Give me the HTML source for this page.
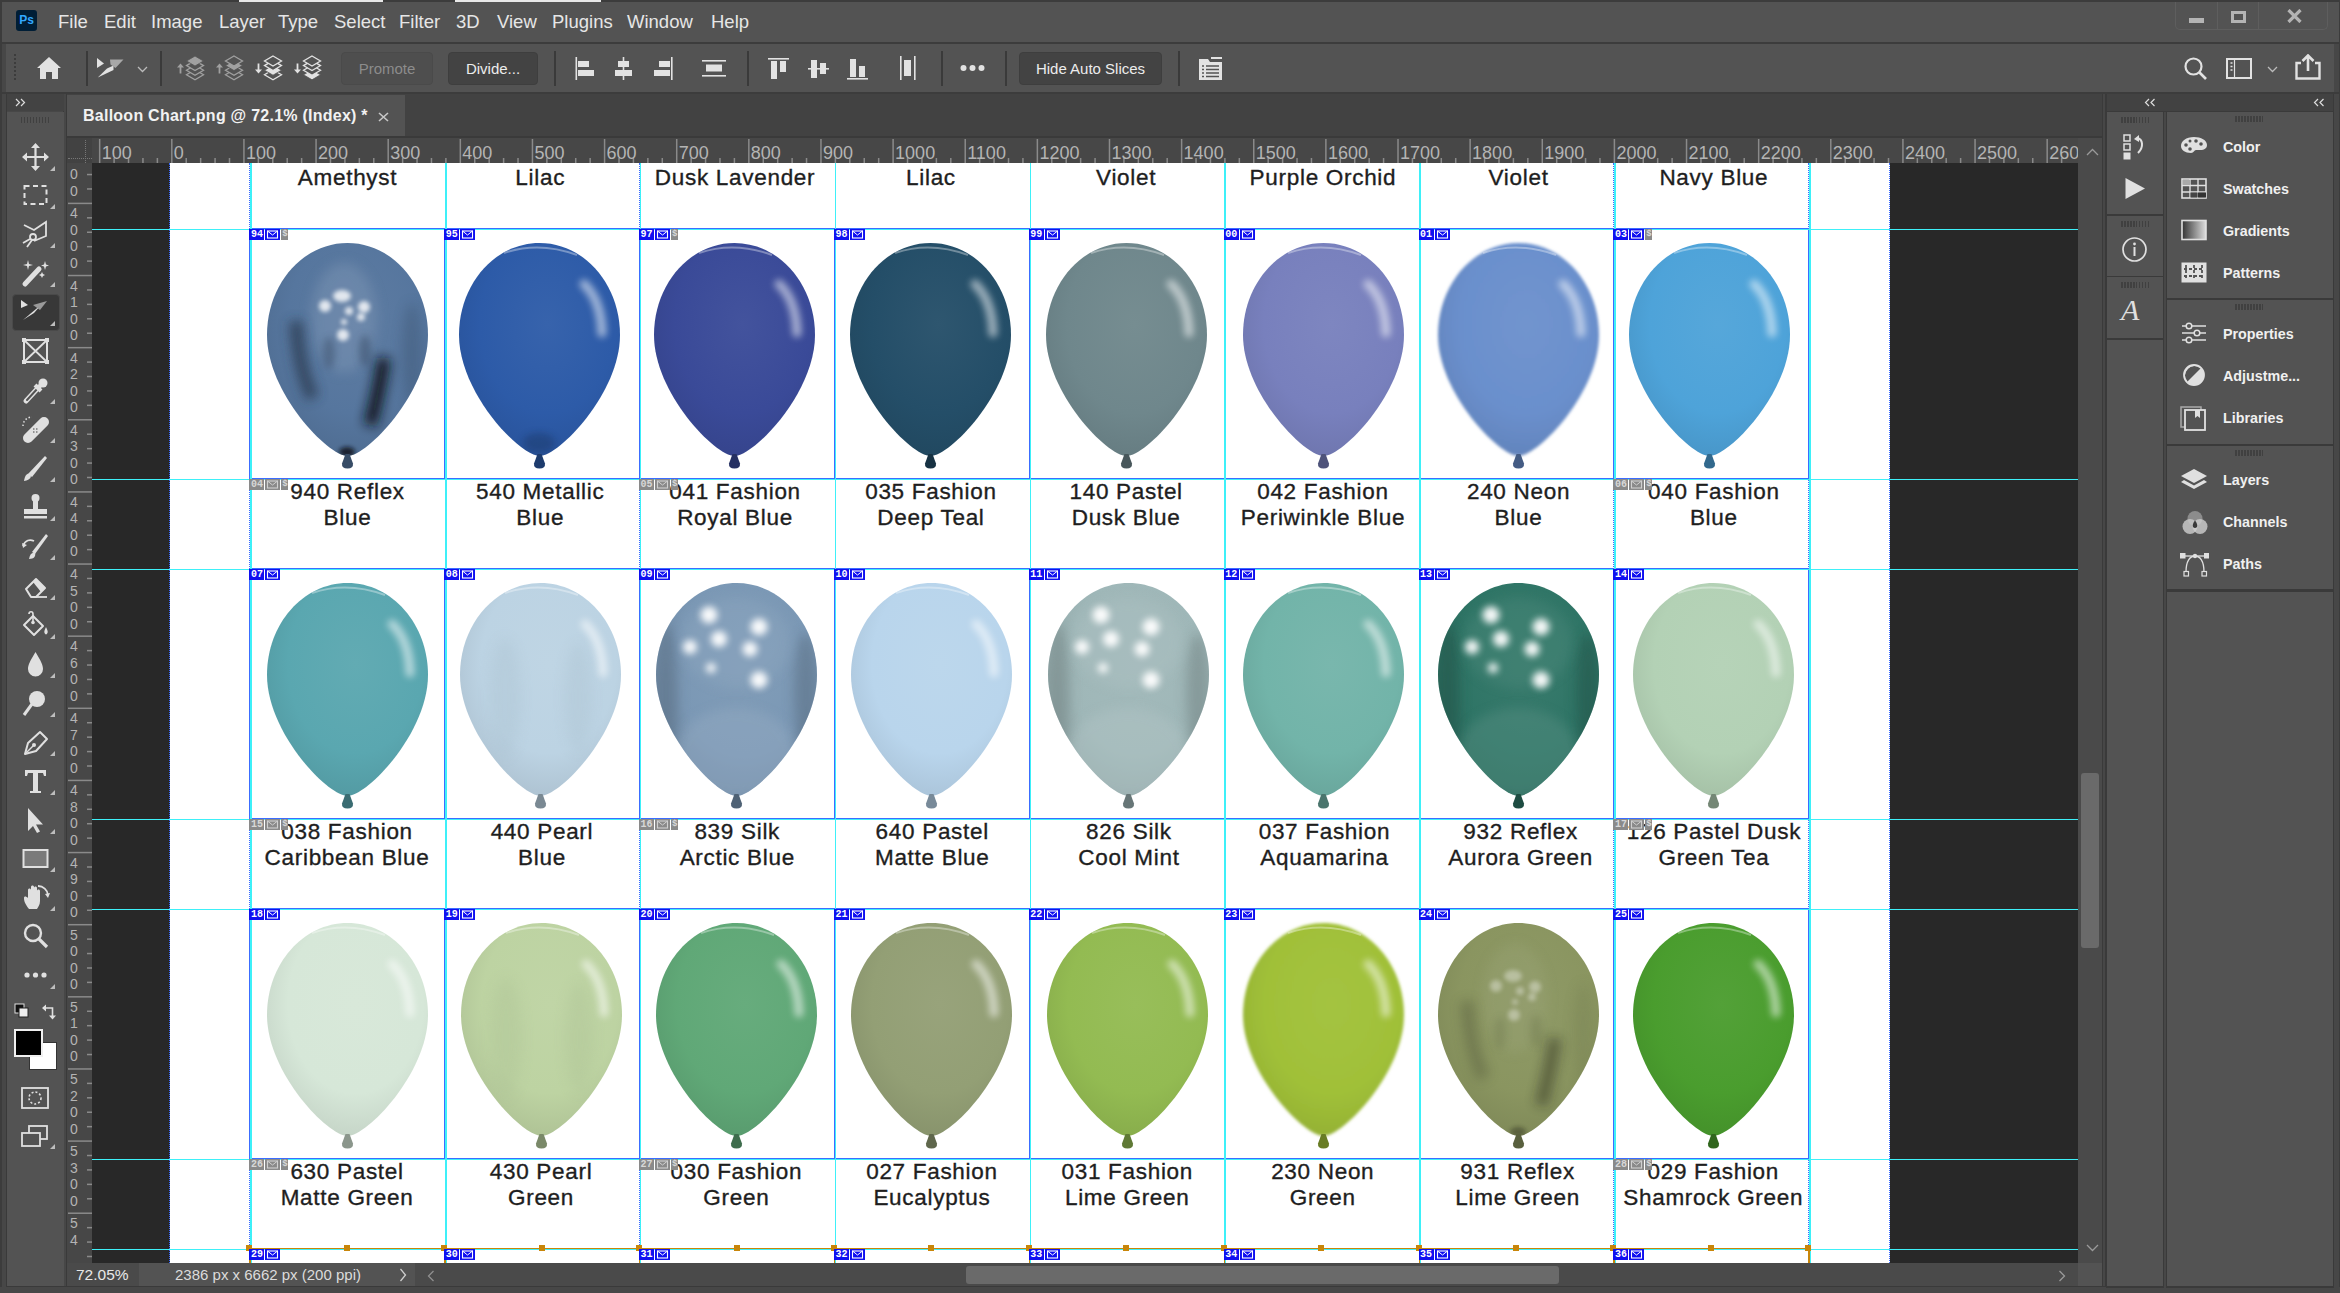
<!DOCTYPE html><html><head><meta charset="utf-8"><style>
*{margin:0;padding:0;box-sizing:border-box}
html,body{width:2340px;height:1293px;overflow:hidden;background:#474747;font-family:"Liberation Sans", sans-serif;position:relative}
.ab{position:absolute}
.menu{position:absolute;top:11px;font-size:18.5px;color:#e6e6e6;white-space:nowrap}
.sep{position:absolute;width:2px;background:#3a3a3a}
.btn{position:absolute;border-radius:4px;font-size:15px;text-align:center;white-space:nowrap}
.rl{position:absolute;font-size:18px;color:#b4b4b4;white-space:nowrap;line-height:1}
.vd{position:absolute;font-size:14px;color:#b4b4b4;line-height:1;width:14px;text-align:center}
.lab{position:absolute;font-size:22.5px;color:#1e1e1e;text-align:center;line-height:26.3px;white-space:nowrap;letter-spacing:0.7px;-webkit-text-stroke:0.35px #1e1e1e}
.pi{position:absolute;font-size:14.3px;font-weight:bold;color:#f0f0f0;white-space:nowrap}
.bd{position:absolute;height:11px;background:#1010f0;color:#fff;font:bold 10px "Liberation Mono",monospace;line-height:11px;text-align:center}
.bg{position:absolute;height:11px;background:#8a8a8a;color:#d8d8d8;font:bold 10px "Liberation Mono",monospace;line-height:11px;text-align:center}
</style></head><body>

<div class="ab" style="left:0;top:0;width:2340px;height:42px;background:#535353"></div>
<div class="ab" style="left:0;top:0;width:2340px;height:1.5px;background:#3c3c3c"></div><div class="ab" style="left:239px;top:0;width:144px;height:1.5px;background:#e8e8e8"></div><div class="ab" style="left:455px;top:0;width:146px;height:1.5px;background:#e8e8e8"></div><div class="ab" style="left:0;top:0;width:1.5px;height:1293px;background:#3c3c3c"></div>
<div class="ab" style="left:16px;top:10px;width:21px;height:21px;background:#001e36;border-radius:3px;color:#31a8ff;font:bold 12px/21px 'Liberation Sans';text-align:center">Ps</div>
<div class="menu" style="left:58px">File</div>
<div class="menu" style="left:104px">Edit</div>
<div class="menu" style="left:151px">Image</div>
<div class="menu" style="left:219px">Layer</div>
<div class="menu" style="left:278px">Type</div>
<div class="menu" style="left:334px">Select</div>
<div class="menu" style="left:399px">Filter</div>
<div class="menu" style="left:456px">3D</div>
<div class="menu" style="left:497px">View</div>
<div class="menu" style="left:552px">Plugins</div>
<div class="menu" style="left:627px">Window</div>
<div class="menu" style="left:711px">Help</div>
<div class="ab" style="left:2175px;top:2px;width:153px;height:28px;border:1px solid #5e5e5e;border-top:none;border-radius:0 0 5px 5px"></div><div class="ab" style="left:2217px;top:2px;width:1px;height:27px;background:#5e5e5e"></div><div class="ab" style="left:2258px;top:2px;width:1px;height:27px;background:#5e5e5e"></div>
<div class="ab" style="left:2189px;top:18px;width:15px;height:5px;background:#b4b4b4"></div>
<div class="ab" style="left:2231px;top:11px;width:15px;height:12px;border:3px solid #b4b4b4"></div>
<svg class="ab" style="left:2286px;top:9px" width="17" height="14"><path d="M2.5 1 L14.5 13 M14.5 1 L2.5 13" stroke="#b4b4b4" stroke-width="3.2"/></svg><div class="ab" style="left:2338.5px;top:0;width:1.5px;height:1293px;background:#3c3c3c"></div>
<div class="ab" style="left:0;top:42px;width:2340px;height:2px;background:#3c3c3c"></div>
<div class="ab" style="left:6px;top:44px;width:2328px;height:48px;background:#535353"></div>
<div class="ab" style="left:0;top:92px;width:2340px;height:2px;background:#3c3c3c"></div>
<div class="ab" style="left:14px;top:54px;width:2px;height:28px;background:repeating-linear-gradient(#3c3c3c 0 2.2px,transparent 2.2px 4px)"></div>
<svg class="ab" style="left:36px;top:56px" width="26" height="24"><path d="M13 1 L25 12 L22 12 L22 23 L16 23 L16 16 L10 16 L10 23 L4 23 L4 12 L1 12 Z" fill="#e2e2e2"/></svg>
<div class="sep" style="left:86px;top:51px;height:35px"></div>
<div class="sep" style="left:160px;top:51px;height:35px"></div>
<div class="sep" style="left:554px;top:51px;height:35px"></div>
<div class="sep" style="left:747px;top:51px;height:35px"></div>
<div class="sep" style="left:941px;top:51px;height:35px"></div>
<div class="sep" style="left:1005px;top:51px;height:35px"></div>
<div class="sep" style="left:1178px;top:51px;height:35px"></div>
<svg class="ab" style="left:96px;top:57px" width="28" height="22"><path d="M1 1 L8 6.5 L1 11 Z" fill="#e2e2e2"/><path d="M1.8 20.5 L11 11.5 L17.5 8.5 L17.5 13 Z" fill="#e2e2e2"/><path d="M14 2.5 L27.5 2.5 L19.5 11 L14.5 7.5 Z" fill="#a8a8a8"/></svg>
<svg class="ab" style="left:137px;top:66px" width="11" height="7"><path d="M1 1 L5.5 5.5 L10 1" stroke="#bbb" stroke-width="1.3" fill="none"/></svg>
<svg class="ab" style="left:177px;top:55px" width="30" height="27"><path d="M3.5 18.5 L3.5 11" stroke="#a0a0a0" stroke-width="1.8"/><path d="M0 12.5 L3.5 8.5 L7 12.5 Z" fill="#a0a0a0"/><path d="M18.0 14.799999999999999 L26.5 19.799999999999997 L18.0 24.799999999999997 L9.5 19.799999999999997 Z" fill="#535353" stroke="#a0a0a0" stroke-width="1.3"/><path d="M18.0 10.2 L26.5 15.2 L18.0 20.2 L9.5 15.2 Z" fill="#535353" stroke="#a0a0a0" stroke-width="1.3"/><path d="M18.0 5.6 L26.5 10.6 L18.0 15.6 L9.5 10.6 Z" fill="#535353" stroke="#a0a0a0" stroke-width="1.3"/><path d="M18.0 1.0 L26.5 6.0 L18.0 11.0 L9.5 6.0 Z" fill="#a0a0a0" stroke="#535353" stroke-width="0.8"/></svg>
<svg class="ab" style="left:216px;top:55px" width="30" height="27"><path d="M3.5 18.5 L3.5 11" stroke="#a0a0a0" stroke-width="1.8"/><path d="M0 12.5 L3.5 8.5 L7 12.5 Z" fill="#a0a0a0"/><path d="M18.0 14.799999999999999 L26.5 19.799999999999997 L18.0 24.799999999999997 L9.5 19.799999999999997 Z" fill="#535353" stroke="#a0a0a0" stroke-width="1.3"/><path d="M18.0 10.2 L26.5 15.2 L18.0 20.2 L9.5 15.2 Z" fill="#535353" stroke="#a0a0a0" stroke-width="1.3"/><path d="M18.0 5.6 L26.5 10.6 L18.0 15.6 L9.5 10.6 Z" fill="#a0a0a0" stroke="#535353" stroke-width="0.8"/><path d="M18.0 1.0 L26.5 6.0 L18.0 11.0 L9.5 6.0 Z" fill="#535353" stroke="#a0a0a0" stroke-width="1.3"/></svg>
<svg class="ab" style="left:255px;top:55px" width="30" height="27"><path d="M3.5 8.5 L3.5 16" stroke="#e2e2e2" stroke-width="1.8"/><path d="M0 14.5 L3.5 18.5 L7 14.5 Z" fill="#e2e2e2"/><path d="M18.0 14.799999999999999 L26.5 19.799999999999997 L18.0 24.799999999999997 L9.5 19.799999999999997 Z" fill="#535353" stroke="#e2e2e2" stroke-width="1.3"/><path d="M18.0 10.2 L26.5 15.2 L18.0 20.2 L9.5 15.2 Z" fill="#e2e2e2" stroke="#535353" stroke-width="0.8"/><path d="M18.0 5.6 L26.5 10.6 L18.0 15.6 L9.5 10.6 Z" fill="#535353" stroke="#e2e2e2" stroke-width="1.3"/><path d="M18.0 1.0 L26.5 6.0 L18.0 11.0 L9.5 6.0 Z" fill="#535353" stroke="#e2e2e2" stroke-width="1.3"/></svg>
<svg class="ab" style="left:294px;top:55px" width="30" height="27"><path d="M3.5 8.5 L3.5 16" stroke="#e2e2e2" stroke-width="1.8"/><path d="M0 14.5 L3.5 18.5 L7 14.5 Z" fill="#e2e2e2"/><path d="M18.0 14.799999999999999 L26.5 19.799999999999997 L18.0 24.799999999999997 L9.5 19.799999999999997 Z" fill="#e2e2e2" stroke="#535353" stroke-width="0.8"/><path d="M18.0 10.2 L26.5 15.2 L18.0 20.2 L9.5 15.2 Z" fill="#535353" stroke="#e2e2e2" stroke-width="1.3"/><path d="M18.0 5.6 L26.5 10.6 L18.0 15.6 L9.5 10.6 Z" fill="#535353" stroke="#e2e2e2" stroke-width="1.3"/><path d="M18.0 1.0 L26.5 6.0 L18.0 11.0 L9.5 6.0 Z" fill="#535353" stroke="#e2e2e2" stroke-width="1.3"/></svg>
<div class="btn" style="left:341px;top:52px;width:92px;height:33px;background:#4e4e4e;border:1px solid #4a4a4a;color:#8c8c8c;line-height:31px">Promote</div>
<div class="btn" style="left:448px;top:52px;width:90px;height:33px;background:#434343;border:1px solid #3e3e3e;color:#ececec;line-height:31px">Divide...</div>
<div class="btn" style="left:1019px;top:52px;width:143px;height:33px;background:#434343;border:1px solid #3e3e3e;color:#ececec;line-height:31px">Hide Auto Slices</div>
<svg class="ab" style="left:575px;top:56px" width="22" height="25"><rect x="0.5" y="1" width="1.6" height="23" fill="#e2e2e2"/><rect x="3" y="5" width="11" height="6" fill="#e2e2e2"/><rect x="3" y="14" width="16" height="6" fill="#e2e2e2"/></svg>
<svg class="ab" style="left:615px;top:56px" width="18" height="25"><rect x="7.7" y="1" width="1.6" height="23" fill="#e2e2e2"/><rect x="3" y="5" width="11" height="6" fill="#e2e2e2"/><rect x="0" y="14" width="17" height="6" fill="#e2e2e2"/></svg>
<svg class="ab" style="left:653px;top:56px" width="22" height="25"><rect x="18" y="1" width="1.6" height="23" fill="#e2e2e2"/><rect x="6" y="5" width="11" height="6" fill="#e2e2e2"/><rect x="1" y="14" width="16" height="6" fill="#e2e2e2"/></svg>
<svg class="ab" style="left:702px;top:60px" width="25" height="17"><rect x="0" y="0" width="24" height="1.6" fill="#e2e2e2"/><rect x="4" y="4.5" width="16" height="7" fill="#e2e2e2"/><rect x="0" y="15" width="24" height="1.6" fill="#e2e2e2"/></svg>
<svg class="ab" style="left:768px;top:58px" width="22" height="22"><rect x="0" y="0" width="21" height="1.6" fill="#e2e2e2"/><rect x="3" y="3" width="6" height="18" fill="#e2e2e2"/><rect x="12" y="3" width="6" height="11" fill="#e2e2e2"/></svg>
<svg class="ab" style="left:808px;top:58px" width="22" height="22"><rect x="0" y="10" width="21" height="1.6" fill="#e2e2e2"/><rect x="3" y="2" width="6" height="18" fill="#e2e2e2"/><rect x="12" y="5" width="6" height="11" fill="#e2e2e2"/></svg>
<svg class="ab" style="left:847px;top:58px" width="22" height="22"><rect x="0" y="20" width="21" height="1.6" fill="#e2e2e2"/><rect x="3" y="1" width="6" height="18" fill="#e2e2e2"/><rect x="12" y="8" width="6" height="11" fill="#e2e2e2"/></svg>
<svg class="ab" style="left:900px;top:56px" width="17" height="25"><rect x="0" y="0" width="1.6" height="24" fill="#e2e2e2"/><rect x="4" y="4" width="7" height="16" fill="#e2e2e2"/><rect x="14" y="0" width="1.6" height="24" fill="#e2e2e2"/></svg>
<svg class="ab" style="left:960px;top:64px" width="26" height="8"><circle cx="3.5" cy="4" r="3" fill="#e2e2e2"/><circle cx="12.5" cy="4" r="3" fill="#e2e2e2"/><circle cx="21.5" cy="4" r="3" fill="#e2e2e2"/></svg>
<svg class="ab" style="left:1198px;top:56px" width="26" height="25"><path d="M1 3 L10 3 L12 6 L24 6 L24 24 L1 24 Z" fill="#e2e2e2"/><rect x="13" y="1" width="11" height="2" fill="#e2e2e2"/><g stroke="#535353" stroke-width="1.3"><path d="M4 10 H6 M8 10 H21 M4 13.5 H6 M8 13.5 H21 M4 17 H6 M8 17 H21 M4 20.5 H6 M8 20.5 H21"/></g></svg>
<svg class="ab" style="left:2184px;top:57px" width="24" height="23"><circle cx="9.5" cy="9.5" r="8" stroke="#e2e2e2" stroke-width="2.2" fill="none"/><path d="M15.5 15.5 L22 22" stroke="#e2e2e2" stroke-width="2.6"/></svg>
<svg class="ab" style="left:2226px;top:58px" width="27" height="22"><rect x="1" y="1" width="24" height="19" stroke="#e2e2e2" stroke-width="2" fill="none"/><path d="M4.5 5 H6.5 M4.5 8.5 H6.5 M4.5 12 H6.5" stroke="#e2e2e2" stroke-width="1.5"/><path d="M8.5 2 V19" stroke="#e2e2e2" stroke-width="1.2"/></svg>
<svg class="ab" style="left:2267px;top:66px" width="11" height="7"><path d="M1 1 L5.5 5.5 L10 1" stroke="#bbb" stroke-width="1.3" fill="none"/></svg>
<svg class="ab" style="left:2295px;top:54px" width="26" height="26"><path d="M6 9 H1.5 V24.5 H24.5 V9 H20" stroke="#e2e2e2" stroke-width="2.4" fill="none"/><path d="M13 17 V2 M7.5 7 L13 1.5 L18.5 7" stroke="#e2e2e2" stroke-width="2.6" fill="none"/></svg>
<div class="ab" style="left:67px;top:94px;width:2037px;height:44px;background:#424242"></div>
<div class="ab" style="left:67px;top:95px;width:338px;height:42px;background:#535353"></div>
<div class="ab" style="left:83px;top:107px;font-size:16px;font-weight:bold;color:#f2f2f2;white-space:nowrap;letter-spacing:0.25px">Balloon Chart.png @ 72.1% (Index) *</div>
<svg class="ab" style="left:378px;top:112px" width="11" height="10"><path d="M1 1 L10 9 M10 1 L1 9" stroke="#c8c8c8" stroke-width="1.6"/></svg>
<div class="ab" style="left:63px;top:94px;width:4px;height:1193px;background:#474747;border-left:1px solid #3a3a3a;border-right:1px solid #3a3a3a"></div>
<div class="ab" style="left:6px;top:94px;width:1px;height:1193px;background:#3a3a3a"></div>
<div class="ab" style="left:7px;top:94px;width:57px;height:17px;background:#434343"></div>
<svg class="ab" style="left:15px;top:98px" width="12" height="9"><path d="M1 1 L4.5 4.5 L1 8 M6 1 L9.5 4.5 L6 8" stroke="#ddd" stroke-width="1.2" fill="none"/></svg>
<div class="ab" style="left:7px;top:112px;width:57px;height:1175px;background:#535353"></div>
<div class="ab" style="left:21px;top:117px;width:28px;height:6px;background:repeating-linear-gradient(90deg,#404040 0 1.5px,transparent 1.5px 3px)"></div>
<div class="ab" style="left:12px;top:294px;width:48px;height:37px;background:#383838;border:1px solid #4a4a4a;border-radius:4px"></div>
<svg class="ab" style="left:20px;top:142px" width="38" height="30"><path d="M15.5 3 V27 M4 15 H27" stroke="#e0e0e0" stroke-width="2.2"/><path d="M15.5 1 L11 6 H20 Z M15.5 29 L11 24 H20 Z M2 15 L7 10.5 V19.5 Z M29 15 L24 10.5 V19.5 Z" fill="#e0e0e0"/><path d="M35 24 L35 29 L30 29 Z" fill="#bdbdbd"/></svg>
<svg class="ab" style="left:20px;top:180px" width="38" height="30"><rect x="4.5" y="6" width="22" height="18" fill="none" stroke="#e0e0e0" stroke-width="2" stroke-dasharray="5 3.5"/><path d="M35 24 L35 29 L30 29 Z" fill="#bdbdbd"/></svg>
<svg class="ab" style="left:20px;top:219px" width="38" height="30"><path d="M4 6 L14 11 L26 3 L26 17 L14 22" stroke="#e0e0e0" stroke-width="1.8" fill="none"/><circle cx="13" cy="18" r="3" stroke="#e0e0e0" stroke-width="1.8" fill="none"/><path d="M10 20 L3 24 M12 21 L7 28" stroke="#e0e0e0" stroke-width="1.8"/><path d="M35 24 L35 29 L30 29 Z" fill="#bdbdbd"/></svg>
<svg class="ab" style="left:20px;top:258px" width="38" height="30"><path d="M5 26 L19 11" stroke="#e0e0e0" stroke-width="5" stroke-linecap="round"/><path d="M8 2 L9 6 L13 7 L9 8 L8 12 L7 8 L3 7 L7 6 Z M25 3 L26 6.5 L29 7.5 L26 8.5 L25 12 L24 8.5 L21 7.5 L24 6.5 Z M22 14 L23 16 L25 17 L23 18 L22 20 L21 18 L19 17 L21 16 Z" fill="#e0e0e0"/><path d="M35 24 L35 29 L30 29 Z" fill="#bdbdbd"/></svg>
<svg class="ab" style="left:20px;top:297px" width="38" height="30"><path d="M1 3 L8 8 L1 11 Z" fill="#e0e0e0"/><path d="M3 23 L16 12 L21 8 L14 16 Z" fill="#e0e0e0"/><path d="M13 8 L27 4 L20 13 Z" fill="#9a9a9a"/><path d="M35 24 L35 29 L30 29 Z" fill="#bdbdbd"/></svg>
<svg class="ab" style="left:20px;top:336px" width="38" height="30"><rect x="4" y="4" width="23" height="22" fill="none" stroke="#e0e0e0" stroke-width="2"/><path d="M4 4 L27 26 M27 4 L4 26" stroke="#e0e0e0" stroke-width="1.8"/><path d="M2 2 h4 v4 h-4z M25 2 h4 v4 h-4z M2 24 h4 v4 h-4z M25 24 h4 v4 h-4z" fill="#e0e0e0"/></svg>
<svg class="ab" style="left:20px;top:375px" width="38" height="30"><path d="M6 26 L19 12" stroke="#e0e0e0" stroke-width="5" stroke-linecap="round"/><path d="M7 25 L18 13" stroke="#535353" stroke-width="2" stroke-linecap="round"/><path d="M15 10 L21 16" stroke="#e0e0e0" stroke-width="4"/><circle cx="23" cy="8" r="4.5" fill="#e0e0e0"/><path d="M35 24 L35 29 L30 29 Z" fill="#bdbdbd"/></svg>
<svg class="ab" style="left:20px;top:414px" width="38" height="30"><path d="M8 24 L24 8" stroke="#e0e0e0" stroke-width="10" stroke-linecap="round"/><path d="M13 15 h6 M13 18 h6" stroke="#777" stroke-width="1.5" stroke-dasharray="1.5 1.5"/><path d="M3 12 A9 9 0 0 1 12 3" stroke="#e0e0e0" stroke-width="1.5" fill="none" stroke-dasharray="1.5 2"/><path d="M35 24 L35 29 L30 29 Z" fill="#bdbdbd"/></svg>
<svg class="ab" style="left:20px;top:453px" width="38" height="30"><path d="M8 21 L25 3 L27 5 L12 24 Z" fill="#e0e0e0"/><path d="M4 28 C5 22 7 20 10 21 C12 23 11 27 4 28 Z" fill="#e0e0e0"/><path d="M35 24 L35 29 L30 29 Z" fill="#bdbdbd"/></svg>
<svg class="ab" style="left:20px;top:492px" width="38" height="30"><circle cx="15.5" cy="6" r="4" fill="#e0e0e0"/><path d="M13 9 h5 v8 h-5z" fill="#e0e0e0"/><path d="M4 17 h23 v5 h-23z M4 24 h23 v2.5 h-23z" fill="#e0e0e0"/><path d="M35 24 L35 29 L30 29 Z" fill="#bdbdbd"/></svg>
<svg class="ab" style="left:20px;top:531px" width="38" height="30"><path d="M12 21 L26 3 L28 5 L15 23 Z" fill="#e0e0e0"/><path d="M9 28 C10 23 12 21 15 22 C16 25 14 28 9 28 Z" fill="#e0e0e0"/><path d="M3 15 C5 9 10 8 14 10" stroke="#e0e0e0" stroke-width="1.8" fill="none"/><path d="M2 12 L3 17 L7 14 Z" fill="#e0e0e0"/><path d="M35 24 L35 29 L30 29 Z" fill="#bdbdbd"/></svg>
<svg class="ab" style="left:20px;top:571px" width="38" height="30"><path d="M6 18 L16 8 L25 17 L16 26 L11 26 Z" fill="none" stroke="#e0e0e0" stroke-width="2" stroke-linejoin="round"/><path d="M13 11 L16 8 L25 17 L21 21 Z" fill="#e0e0e0"/><path d="M11 26 H27" stroke="#e0e0e0" stroke-width="1.8"/><path d="M35 24 L35 29 L30 29 Z" fill="#bdbdbd"/></svg>
<svg class="ab" style="left:20px;top:610px" width="38" height="30"><path d="M4 15 L13 6 L23 16 L14 25 Z" fill="none" stroke="#e0e0e0" stroke-width="2" stroke-linejoin="round"/><path d="M9 4 C9 1 13 1 13 4 L13 12" stroke="#e0e0e0" stroke-width="1.6" fill="none"/><circle cx="13" cy="12.5" r="1.8" fill="#e0e0e0"/><path d="M26 17 C24 21 23.5 23 26 24.5 C28.5 23 28 21 26 17 Z" fill="#e0e0e0"/><path d="M35 24 L35 29 L30 29 Z" fill="#bdbdbd"/></svg>
<svg class="ab" style="left:20px;top:649px" width="38" height="30"><path d="M15.5 3 C10 12 8 16 8 20 A7.5 7.5 0 0 0 23 20 C23 16 21 12 15.5 3 Z" fill="#e0e0e0"/><path d="M35 24 L35 29 L30 29 Z" fill="#bdbdbd"/></svg>
<svg class="ab" style="left:20px;top:688px" width="38" height="30"><circle cx="17" cy="11" r="8" fill="#e0e0e0"/><path d="M12 16 L4 27" stroke="#e0e0e0" stroke-width="3"/><path d="M35 24 L35 29 L30 29 Z" fill="#bdbdbd"/></svg>
<svg class="ab" style="left:20px;top:727px" width="38" height="30"><path d="M5 27 L8 16 L20 5 L27 12 L16 24 Z" stroke="#e0e0e0" stroke-width="2" fill="none" stroke-linejoin="round"/><path d="M5 27 L13 19" stroke="#e0e0e0" stroke-width="1.5"/><circle cx="14" cy="18" r="2" fill="#e0e0e0"/><path d="M35 24 L35 29 L30 29 Z" fill="#bdbdbd"/></svg>
<svg class="ab" style="left:20px;top:766px" width="38" height="30"><path d="M5 4 H26 V10 H24 L23 7 H18 V25 H21 V27 H10 V25 H13 V7 H8 L7 10 H5 Z" fill="#e0e0e0"/><path d="M35 24 L35 29 L30 29 Z" fill="#bdbdbd"/></svg>
<svg class="ab" style="left:20px;top:805px" width="38" height="30"><path d="M8 3 L8 26 L13 21 L17 28 L20 26.5 L16 19.5 L23 19.5 Z" fill="#e0e0e0"/><path d="M35 24 L35 29 L30 29 Z" fill="#bdbdbd"/></svg>
<svg class="ab" style="left:20px;top:843px" width="38" height="30"><rect x="3.5" y="7" width="24" height="17" fill="#7a7a7a" stroke="#e0e0e0" stroke-width="2"/><path d="M35 24 L35 29 L30 29 Z" fill="#bdbdbd"/></svg>
<svg class="ab" style="left:20px;top:882px" width="38" height="30"><path d="M9 27 C5 22 4 19 4 16 C4 14 6 14 8 16 V8 C8 6 11 6 11 8 V13 V5 C11 3 14 3 14 5 V13 V6 C14 4 17 4 17 6 V14 V9 C17 7 20 7 20 9 V19 C20 23 18 25 17 27 Z" fill="#e0e0e0"/><path d="M18 4 A10 10 0 0 1 28 13" stroke="#e0e0e0" stroke-width="1.8" fill="none"/><path d="M25 12 L28 16 L30 11 Z" fill="#e0e0e0"/><path d="M35 24 L35 29 L30 29 Z" fill="#bdbdbd"/></svg>
<svg class="ab" style="left:20px;top:921px" width="38" height="30"><circle cx="13" cy="12" r="8" stroke="#e0e0e0" stroke-width="2.4" fill="none"/><path d="M19 18 L27 26" stroke="#e0e0e0" stroke-width="3.2"/></svg>
<svg class="ab" style="left:20px;top:960px" width="38" height="30"><circle cx="7" cy="15" r="2.6" fill="#e0e0e0"/><circle cx="15.5" cy="15" r="2.6" fill="#e0e0e0"/><circle cx="24" cy="15" r="2.6" fill="#e0e0e0"/><path d="M35 24 L35 29 L30 29 Z" fill="#bdbdbd"/></svg>
<svg class="ab" style="left:14px;top:1003px" width="46" height="20"><rect x="1" y="1" width="9" height="9" fill="#111" stroke="#e0e0e0" stroke-width="1"/><rect x="5" y="5" width="9" height="9" fill="#eee" stroke="#222" stroke-width="1"/><path d="M29.5 5 H38.5 V14.5" stroke="#e0e0e0" stroke-width="1.6" fill="none"/><path d="M28 5 L32 1.5 L32 8.5 Z M38.5 16.5 L35 12.5 L42 12.5 Z" fill="#e0e0e0"/></svg>
<div class="ab" style="left:29px;top:1042px;width:28px;height:28px;background:#fff;border:1px solid #333"></div>
<div class="ab" style="left:14px;top:1029px;width:29px;height:28px;background:#000;border:2px solid #f0f0f0"></div>
<svg class="ab" style="left:21px;top:1087px" width="29" height="23"><rect x="1" y="1" width="26" height="20" fill="none" stroke="#e0e0e0" stroke-width="1.8"/><circle cx="14" cy="11" r="6" fill="none" stroke="#e0e0e0" stroke-width="1.6" stroke-dasharray="2 2"/></svg>
<svg class="ab" style="left:20px;top:1124px" width="38" height="26"><rect x="9" y="2" width="18" height="13" fill="#535353" stroke="#e0e0e0" stroke-width="1.8"/><rect x="2" y="9" width="18" height="13" fill="#535353" stroke="#e0e0e0" stroke-width="1.8"/><path d="M35 20 L35 25 L30 25 Z" fill="#bdbdbd"/></svg>
<div class="ab" style="left:67px;top:136px;width:2037px;height:2px;background:#3a3a3a"></div>
<div class="ab" style="left:67px;top:138px;width:2011px;height:25px;background:#474747"></div>
<div class="ab" style="left:67px;top:163px;width:25px;height:1100px;background:#474747"></div>
<div class="ab" style="left:67px;top:138px;width:25px;height:25px;background:#424242"></div>
<div class="ab" style="left:68px;top:158px;width:24px;height:1px;border-top:1px dotted #777"></div>
<div class="ab" style="left:85px;top:140px;width:1px;height:23px;border-left:1px dotted #777"></div>
<svg class="ab" style="left:0;top:138px" width="2078" height="25"><rect x="98.92" y="1" width="1.5" height="24" fill="#8a8a8a"/><rect x="113.35" y="20" width="1.5" height="5" fill="#8a8a8a"/><rect x="127.77" y="20" width="1.5" height="5" fill="#8a8a8a"/><rect x="142.20" y="20" width="1.5" height="5" fill="#8a8a8a"/><rect x="156.62" y="20" width="1.5" height="5" fill="#8a8a8a"/><rect x="171.05" y="1" width="1.5" height="24" fill="#8a8a8a"/><rect x="185.48" y="20" width="1.5" height="5" fill="#8a8a8a"/><rect x="199.90" y="20" width="1.5" height="5" fill="#8a8a8a"/><rect x="214.33" y="20" width="1.5" height="5" fill="#8a8a8a"/><rect x="228.75" y="20" width="1.5" height="5" fill="#8a8a8a"/><rect x="243.18" y="1" width="1.5" height="24" fill="#8a8a8a"/><rect x="257.61" y="20" width="1.5" height="5" fill="#8a8a8a"/><rect x="272.03" y="20" width="1.5" height="5" fill="#8a8a8a"/><rect x="286.46" y="20" width="1.5" height="5" fill="#8a8a8a"/><rect x="300.88" y="20" width="1.5" height="5" fill="#8a8a8a"/><rect x="315.31" y="1" width="1.5" height="24" fill="#8a8a8a"/><rect x="329.74" y="20" width="1.5" height="5" fill="#8a8a8a"/><rect x="344.16" y="20" width="1.5" height="5" fill="#8a8a8a"/><rect x="358.59" y="20" width="1.5" height="5" fill="#8a8a8a"/><rect x="373.01" y="20" width="1.5" height="5" fill="#8a8a8a"/><rect x="387.44" y="1" width="1.5" height="24" fill="#8a8a8a"/><rect x="401.87" y="20" width="1.5" height="5" fill="#8a8a8a"/><rect x="416.29" y="20" width="1.5" height="5" fill="#8a8a8a"/><rect x="430.72" y="20" width="1.5" height="5" fill="#8a8a8a"/><rect x="445.14" y="20" width="1.5" height="5" fill="#8a8a8a"/><rect x="459.57" y="1" width="1.5" height="24" fill="#8a8a8a"/><rect x="474.00" y="20" width="1.5" height="5" fill="#8a8a8a"/><rect x="488.42" y="20" width="1.5" height="5" fill="#8a8a8a"/><rect x="502.85" y="20" width="1.5" height="5" fill="#8a8a8a"/><rect x="517.27" y="20" width="1.5" height="5" fill="#8a8a8a"/><rect x="531.70" y="1" width="1.5" height="24" fill="#8a8a8a"/><rect x="546.13" y="20" width="1.5" height="5" fill="#8a8a8a"/><rect x="560.55" y="20" width="1.5" height="5" fill="#8a8a8a"/><rect x="574.98" y="20" width="1.5" height="5" fill="#8a8a8a"/><rect x="589.40" y="20" width="1.5" height="5" fill="#8a8a8a"/><rect x="603.83" y="1" width="1.5" height="24" fill="#8a8a8a"/><rect x="618.26" y="20" width="1.5" height="5" fill="#8a8a8a"/><rect x="632.68" y="20" width="1.5" height="5" fill="#8a8a8a"/><rect x="647.11" y="20" width="1.5" height="5" fill="#8a8a8a"/><rect x="661.53" y="20" width="1.5" height="5" fill="#8a8a8a"/><rect x="675.96" y="1" width="1.5" height="24" fill="#8a8a8a"/><rect x="690.39" y="20" width="1.5" height="5" fill="#8a8a8a"/><rect x="704.81" y="20" width="1.5" height="5" fill="#8a8a8a"/><rect x="719.24" y="20" width="1.5" height="5" fill="#8a8a8a"/><rect x="733.66" y="20" width="1.5" height="5" fill="#8a8a8a"/><rect x="748.09" y="1" width="1.5" height="24" fill="#8a8a8a"/><rect x="762.52" y="20" width="1.5" height="5" fill="#8a8a8a"/><rect x="776.94" y="20" width="1.5" height="5" fill="#8a8a8a"/><rect x="791.37" y="20" width="1.5" height="5" fill="#8a8a8a"/><rect x="805.79" y="20" width="1.5" height="5" fill="#8a8a8a"/><rect x="820.22" y="1" width="1.5" height="24" fill="#8a8a8a"/><rect x="834.65" y="20" width="1.5" height="5" fill="#8a8a8a"/><rect x="849.07" y="20" width="1.5" height="5" fill="#8a8a8a"/><rect x="863.50" y="20" width="1.5" height="5" fill="#8a8a8a"/><rect x="877.92" y="20" width="1.5" height="5" fill="#8a8a8a"/><rect x="892.35" y="1" width="1.5" height="24" fill="#8a8a8a"/><rect x="906.78" y="20" width="1.5" height="5" fill="#8a8a8a"/><rect x="921.20" y="20" width="1.5" height="5" fill="#8a8a8a"/><rect x="935.63" y="20" width="1.5" height="5" fill="#8a8a8a"/><rect x="950.05" y="20" width="1.5" height="5" fill="#8a8a8a"/><rect x="964.48" y="1" width="1.5" height="24" fill="#8a8a8a"/><rect x="978.91" y="20" width="1.5" height="5" fill="#8a8a8a"/><rect x="993.33" y="20" width="1.5" height="5" fill="#8a8a8a"/><rect x="1007.76" y="20" width="1.5" height="5" fill="#8a8a8a"/><rect x="1022.18" y="20" width="1.5" height="5" fill="#8a8a8a"/><rect x="1036.61" y="1" width="1.5" height="24" fill="#8a8a8a"/><rect x="1051.04" y="20" width="1.5" height="5" fill="#8a8a8a"/><rect x="1065.46" y="20" width="1.5" height="5" fill="#8a8a8a"/><rect x="1079.89" y="20" width="1.5" height="5" fill="#8a8a8a"/><rect x="1094.31" y="20" width="1.5" height="5" fill="#8a8a8a"/><rect x="1108.74" y="1" width="1.5" height="24" fill="#8a8a8a"/><rect x="1123.17" y="20" width="1.5" height="5" fill="#8a8a8a"/><rect x="1137.59" y="20" width="1.5" height="5" fill="#8a8a8a"/><rect x="1152.02" y="20" width="1.5" height="5" fill="#8a8a8a"/><rect x="1166.44" y="20" width="1.5" height="5" fill="#8a8a8a"/><rect x="1180.87" y="1" width="1.5" height="24" fill="#8a8a8a"/><rect x="1195.30" y="20" width="1.5" height="5" fill="#8a8a8a"/><rect x="1209.72" y="20" width="1.5" height="5" fill="#8a8a8a"/><rect x="1224.15" y="20" width="1.5" height="5" fill="#8a8a8a"/><rect x="1238.57" y="20" width="1.5" height="5" fill="#8a8a8a"/><rect x="1253.00" y="1" width="1.5" height="24" fill="#8a8a8a"/><rect x="1267.43" y="20" width="1.5" height="5" fill="#8a8a8a"/><rect x="1281.85" y="20" width="1.5" height="5" fill="#8a8a8a"/><rect x="1296.28" y="20" width="1.5" height="5" fill="#8a8a8a"/><rect x="1310.70" y="20" width="1.5" height="5" fill="#8a8a8a"/><rect x="1325.13" y="1" width="1.5" height="24" fill="#8a8a8a"/><rect x="1339.56" y="20" width="1.5" height="5" fill="#8a8a8a"/><rect x="1353.98" y="20" width="1.5" height="5" fill="#8a8a8a"/><rect x="1368.41" y="20" width="1.5" height="5" fill="#8a8a8a"/><rect x="1382.83" y="20" width="1.5" height="5" fill="#8a8a8a"/><rect x="1397.26" y="1" width="1.5" height="24" fill="#8a8a8a"/><rect x="1411.69" y="20" width="1.5" height="5" fill="#8a8a8a"/><rect x="1426.11" y="20" width="1.5" height="5" fill="#8a8a8a"/><rect x="1440.54" y="20" width="1.5" height="5" fill="#8a8a8a"/><rect x="1454.96" y="20" width="1.5" height="5" fill="#8a8a8a"/><rect x="1469.39" y="1" width="1.5" height="24" fill="#8a8a8a"/><rect x="1483.82" y="20" width="1.5" height="5" fill="#8a8a8a"/><rect x="1498.24" y="20" width="1.5" height="5" fill="#8a8a8a"/><rect x="1512.67" y="20" width="1.5" height="5" fill="#8a8a8a"/><rect x="1527.09" y="20" width="1.5" height="5" fill="#8a8a8a"/><rect x="1541.52" y="1" width="1.5" height="24" fill="#8a8a8a"/><rect x="1555.95" y="20" width="1.5" height="5" fill="#8a8a8a"/><rect x="1570.37" y="20" width="1.5" height="5" fill="#8a8a8a"/><rect x="1584.80" y="20" width="1.5" height="5" fill="#8a8a8a"/><rect x="1599.22" y="20" width="1.5" height="5" fill="#8a8a8a"/><rect x="1613.65" y="1" width="1.5" height="24" fill="#8a8a8a"/><rect x="1628.08" y="20" width="1.5" height="5" fill="#8a8a8a"/><rect x="1642.50" y="20" width="1.5" height="5" fill="#8a8a8a"/><rect x="1656.93" y="20" width="1.5" height="5" fill="#8a8a8a"/><rect x="1671.35" y="20" width="1.5" height="5" fill="#8a8a8a"/><rect x="1685.78" y="1" width="1.5" height="24" fill="#8a8a8a"/><rect x="1700.21" y="20" width="1.5" height="5" fill="#8a8a8a"/><rect x="1714.63" y="20" width="1.5" height="5" fill="#8a8a8a"/><rect x="1729.06" y="20" width="1.5" height="5" fill="#8a8a8a"/><rect x="1743.48" y="20" width="1.5" height="5" fill="#8a8a8a"/><rect x="1757.91" y="1" width="1.5" height="24" fill="#8a8a8a"/><rect x="1772.34" y="20" width="1.5" height="5" fill="#8a8a8a"/><rect x="1786.76" y="20" width="1.5" height="5" fill="#8a8a8a"/><rect x="1801.19" y="20" width="1.5" height="5" fill="#8a8a8a"/><rect x="1815.61" y="20" width="1.5" height="5" fill="#8a8a8a"/><rect x="1830.04" y="1" width="1.5" height="24" fill="#8a8a8a"/><rect x="1844.47" y="20" width="1.5" height="5" fill="#8a8a8a"/><rect x="1858.89" y="20" width="1.5" height="5" fill="#8a8a8a"/><rect x="1873.32" y="20" width="1.5" height="5" fill="#8a8a8a"/><rect x="1887.74" y="20" width="1.5" height="5" fill="#8a8a8a"/><rect x="1902.17" y="1" width="1.5" height="24" fill="#8a8a8a"/><rect x="1916.60" y="20" width="1.5" height="5" fill="#8a8a8a"/><rect x="1931.02" y="20" width="1.5" height="5" fill="#8a8a8a"/><rect x="1945.45" y="20" width="1.5" height="5" fill="#8a8a8a"/><rect x="1959.87" y="20" width="1.5" height="5" fill="#8a8a8a"/><rect x="1974.30" y="1" width="1.5" height="24" fill="#8a8a8a"/><rect x="1988.73" y="20" width="1.5" height="5" fill="#8a8a8a"/><rect x="2003.15" y="20" width="1.5" height="5" fill="#8a8a8a"/><rect x="2017.58" y="20" width="1.5" height="5" fill="#8a8a8a"/><rect x="2032.00" y="20" width="1.5" height="5" fill="#8a8a8a"/><rect x="2046.43" y="1" width="1.5" height="24" fill="#8a8a8a"/><rect x="2060.86" y="20" width="1.5" height="5" fill="#8a8a8a"/></svg>
<div class="rl" style="left:101.7px;top:144px">100</div>
<div class="rl" style="left:173.8px;top:144px">0</div>
<div class="rl" style="left:245.9px;top:144px">100</div>
<div class="rl" style="left:318.1px;top:144px">200</div>
<div class="rl" style="left:390.2px;top:144px">300</div>
<div class="rl" style="left:462.3px;top:144px">400</div>
<div class="rl" style="left:534.5px;top:144px">500</div>
<div class="rl" style="left:606.6px;top:144px">600</div>
<div class="rl" style="left:678.7px;top:144px">700</div>
<div class="rl" style="left:750.8px;top:144px">800</div>
<div class="rl" style="left:823.0px;top:144px">900</div>
<div class="rl" style="left:895.1px;top:144px">1000</div>
<div class="rl" style="left:967.2px;top:144px">1100</div>
<div class="rl" style="left:1039.4px;top:144px">1200</div>
<div class="rl" style="left:1111.5px;top:144px">1300</div>
<div class="rl" style="left:1183.6px;top:144px">1400</div>
<div class="rl" style="left:1255.7px;top:144px">1500</div>
<div class="rl" style="left:1327.9px;top:144px">1600</div>
<div class="rl" style="left:1400.0px;top:144px">1700</div>
<div class="rl" style="left:1472.1px;top:144px">1800</div>
<div class="rl" style="left:1544.3px;top:144px">1900</div>
<div class="rl" style="left:1616.4px;top:144px">2000</div>
<div class="rl" style="left:1688.5px;top:144px">2100</div>
<div class="rl" style="left:1760.7px;top:144px">2200</div>
<div class="rl" style="left:1832.8px;top:144px">2300</div>
<div class="rl" style="left:1904.9px;top:144px">2400</div>
<div class="rl" style="left:1977.0px;top:144px">2500</div>
<div class="rl" style="left:2049.2px;top:144px">2600</div>
<div class="ab" style="left:2078px;top:138px;width:2px;height:25px;background:#474747"></div>
<svg class="ab" style="left:67px;top:163px" width="25" height="1100"><rect x="20" y="10.80" width="5" height="1.5" fill="#8a8a8a"/><rect x="20" y="25.22" width="5" height="1.5" fill="#8a8a8a"/><rect x="1" y="39.65" width="24" height="1.5" fill="#8a8a8a"/><rect x="20" y="54.08" width="5" height="1.5" fill="#8a8a8a"/><rect x="20" y="68.50" width="5" height="1.5" fill="#8a8a8a"/><rect x="20" y="82.93" width="5" height="1.5" fill="#8a8a8a"/><rect x="20" y="97.35" width="5" height="1.5" fill="#8a8a8a"/><rect x="1" y="111.78" width="24" height="1.5" fill="#8a8a8a"/><rect x="20" y="126.21" width="5" height="1.5" fill="#8a8a8a"/><rect x="20" y="140.63" width="5" height="1.5" fill="#8a8a8a"/><rect x="20" y="155.06" width="5" height="1.5" fill="#8a8a8a"/><rect x="20" y="169.48" width="5" height="1.5" fill="#8a8a8a"/><rect x="1" y="183.91" width="24" height="1.5" fill="#8a8a8a"/><rect x="20" y="198.34" width="5" height="1.5" fill="#8a8a8a"/><rect x="20" y="212.76" width="5" height="1.5" fill="#8a8a8a"/><rect x="20" y="227.19" width="5" height="1.5" fill="#8a8a8a"/><rect x="20" y="241.61" width="5" height="1.5" fill="#8a8a8a"/><rect x="1" y="256.04" width="24" height="1.5" fill="#8a8a8a"/><rect x="20" y="270.47" width="5" height="1.5" fill="#8a8a8a"/><rect x="20" y="284.89" width="5" height="1.5" fill="#8a8a8a"/><rect x="20" y="299.32" width="5" height="1.5" fill="#8a8a8a"/><rect x="20" y="313.74" width="5" height="1.5" fill="#8a8a8a"/><rect x="1" y="328.17" width="24" height="1.5" fill="#8a8a8a"/><rect x="20" y="342.60" width="5" height="1.5" fill="#8a8a8a"/><rect x="20" y="357.02" width="5" height="1.5" fill="#8a8a8a"/><rect x="20" y="371.45" width="5" height="1.5" fill="#8a8a8a"/><rect x="20" y="385.87" width="5" height="1.5" fill="#8a8a8a"/><rect x="1" y="400.30" width="24" height="1.5" fill="#8a8a8a"/><rect x="20" y="414.73" width="5" height="1.5" fill="#8a8a8a"/><rect x="20" y="429.15" width="5" height="1.5" fill="#8a8a8a"/><rect x="20" y="443.58" width="5" height="1.5" fill="#8a8a8a"/><rect x="20" y="458.00" width="5" height="1.5" fill="#8a8a8a"/><rect x="1" y="472.43" width="24" height="1.5" fill="#8a8a8a"/><rect x="20" y="486.86" width="5" height="1.5" fill="#8a8a8a"/><rect x="20" y="501.28" width="5" height="1.5" fill="#8a8a8a"/><rect x="20" y="515.71" width="5" height="1.5" fill="#8a8a8a"/><rect x="20" y="530.13" width="5" height="1.5" fill="#8a8a8a"/><rect x="1" y="544.56" width="24" height="1.5" fill="#8a8a8a"/><rect x="20" y="558.99" width="5" height="1.5" fill="#8a8a8a"/><rect x="20" y="573.41" width="5" height="1.5" fill="#8a8a8a"/><rect x="20" y="587.84" width="5" height="1.5" fill="#8a8a8a"/><rect x="20" y="602.26" width="5" height="1.5" fill="#8a8a8a"/><rect x="1" y="616.69" width="24" height="1.5" fill="#8a8a8a"/><rect x="20" y="631.12" width="5" height="1.5" fill="#8a8a8a"/><rect x="20" y="645.54" width="5" height="1.5" fill="#8a8a8a"/><rect x="20" y="659.97" width="5" height="1.5" fill="#8a8a8a"/><rect x="20" y="674.39" width="5" height="1.5" fill="#8a8a8a"/><rect x="1" y="688.82" width="24" height="1.5" fill="#8a8a8a"/><rect x="20" y="703.25" width="5" height="1.5" fill="#8a8a8a"/><rect x="20" y="717.67" width="5" height="1.5" fill="#8a8a8a"/><rect x="20" y="732.10" width="5" height="1.5" fill="#8a8a8a"/><rect x="20" y="746.52" width="5" height="1.5" fill="#8a8a8a"/><rect x="1" y="760.95" width="24" height="1.5" fill="#8a8a8a"/><rect x="20" y="775.38" width="5" height="1.5" fill="#8a8a8a"/><rect x="20" y="789.80" width="5" height="1.5" fill="#8a8a8a"/><rect x="20" y="804.23" width="5" height="1.5" fill="#8a8a8a"/><rect x="20" y="818.65" width="5" height="1.5" fill="#8a8a8a"/><rect x="1" y="833.08" width="24" height="1.5" fill="#8a8a8a"/><rect x="20" y="847.51" width="5" height="1.5" fill="#8a8a8a"/><rect x="20" y="861.93" width="5" height="1.5" fill="#8a8a8a"/><rect x="20" y="876.36" width="5" height="1.5" fill="#8a8a8a"/><rect x="20" y="890.78" width="5" height="1.5" fill="#8a8a8a"/><rect x="1" y="905.21" width="24" height="1.5" fill="#8a8a8a"/><rect x="20" y="919.64" width="5" height="1.5" fill="#8a8a8a"/><rect x="20" y="934.06" width="5" height="1.5" fill="#8a8a8a"/><rect x="20" y="948.49" width="5" height="1.5" fill="#8a8a8a"/><rect x="20" y="962.91" width="5" height="1.5" fill="#8a8a8a"/><rect x="1" y="977.34" width="24" height="1.5" fill="#8a8a8a"/><rect x="20" y="991.77" width="5" height="1.5" fill="#8a8a8a"/><rect x="20" y="1006.19" width="5" height="1.5" fill="#8a8a8a"/><rect x="20" y="1020.62" width="5" height="1.5" fill="#8a8a8a"/><rect x="20" y="1035.04" width="5" height="1.5" fill="#8a8a8a"/><rect x="1" y="1049.47" width="24" height="1.5" fill="#8a8a8a"/><rect x="20" y="1063.90" width="5" height="1.5" fill="#8a8a8a"/><rect x="20" y="1078.32" width="5" height="1.5" fill="#8a8a8a"/><rect x="20" y="1092.75" width="5" height="1.5" fill="#8a8a8a"/></svg>
<div class="vd" style="left:67px;top:167.3px">0</div>
<div class="vd" style="left:67px;top:183.8px">0</div>
<div class="vd" style="left:67px;top:206.4px">4</div>
<div class="vd" style="left:67px;top:222.9px">0</div>
<div class="vd" style="left:67px;top:239.4px">0</div>
<div class="vd" style="left:67px;top:255.9px">0</div>
<div class="vd" style="left:67px;top:278.5px">4</div>
<div class="vd" style="left:67px;top:295.0px">1</div>
<div class="vd" style="left:67px;top:311.5px">0</div>
<div class="vd" style="left:67px;top:328.0px">0</div>
<div class="vd" style="left:67px;top:350.7px">4</div>
<div class="vd" style="left:67px;top:367.2px">2</div>
<div class="vd" style="left:67px;top:383.7px">0</div>
<div class="vd" style="left:67px;top:400.2px">0</div>
<div class="vd" style="left:67px;top:422.8px">4</div>
<div class="vd" style="left:67px;top:439.3px">3</div>
<div class="vd" style="left:67px;top:455.8px">0</div>
<div class="vd" style="left:67px;top:472.3px">0</div>
<div class="vd" style="left:67px;top:494.9px">4</div>
<div class="vd" style="left:67px;top:511.4px">4</div>
<div class="vd" style="left:67px;top:527.9px">0</div>
<div class="vd" style="left:67px;top:544.4px">0</div>
<div class="vd" style="left:67px;top:567.0px">4</div>
<div class="vd" style="left:67px;top:583.5px">5</div>
<div class="vd" style="left:67px;top:600.0px">0</div>
<div class="vd" style="left:67px;top:616.5px">0</div>
<div class="vd" style="left:67px;top:639.2px">4</div>
<div class="vd" style="left:67px;top:655.7px">6</div>
<div class="vd" style="left:67px;top:672.2px">0</div>
<div class="vd" style="left:67px;top:688.7px">0</div>
<div class="vd" style="left:67px;top:711.3px">4</div>
<div class="vd" style="left:67px;top:727.8px">7</div>
<div class="vd" style="left:67px;top:744.3px">0</div>
<div class="vd" style="left:67px;top:760.8px">0</div>
<div class="vd" style="left:67px;top:783.4px">4</div>
<div class="vd" style="left:67px;top:799.9px">8</div>
<div class="vd" style="left:67px;top:816.4px">0</div>
<div class="vd" style="left:67px;top:832.9px">0</div>
<div class="vd" style="left:67px;top:855.6px">4</div>
<div class="vd" style="left:67px;top:872.1px">9</div>
<div class="vd" style="left:67px;top:888.6px">0</div>
<div class="vd" style="left:67px;top:905.1px">0</div>
<div class="vd" style="left:67px;top:927.7px">5</div>
<div class="vd" style="left:67px;top:944.2px">0</div>
<div class="vd" style="left:67px;top:960.7px">0</div>
<div class="vd" style="left:67px;top:977.2px">0</div>
<div class="vd" style="left:67px;top:999.8px">5</div>
<div class="vd" style="left:67px;top:1016.3px">1</div>
<div class="vd" style="left:67px;top:1032.8px">0</div>
<div class="vd" style="left:67px;top:1049.3px">0</div>
<div class="vd" style="left:67px;top:1072.0px">5</div>
<div class="vd" style="left:67px;top:1088.5px">2</div>
<div class="vd" style="left:67px;top:1105.0px">0</div>
<div class="vd" style="left:67px;top:1121.5px">0</div>
<div class="vd" style="left:67px;top:1144.1px">5</div>
<div class="vd" style="left:67px;top:1160.6px">3</div>
<div class="vd" style="left:67px;top:1177.1px">0</div>
<div class="vd" style="left:67px;top:1193.6px">0</div>
<div class="vd" style="left:67px;top:1216.2px">5</div>
<div class="vd" style="left:67px;top:1232.7px">4</div>
<div class="ab" style="left:92px;top:163px;width:1986px;height:1100px;background:#282828;overflow:hidden" id="cv">
<div class="ab" style="left:-92px;top:-163px;width:2340px;height:1293px">
<div class="ab" style="left:170px;top:163px;width:1720px;height:1100px;background:#fff"></div>
<svg width="0" height="0" style="position:absolute"><defs><filter id="blur2" x="-200%" y="-200%" width="500%" height="500%"><feGaussianBlur stdDeviation="2.2"/></filter><filter id="blur6" x="-200%" y="-200%" width="500%" height="500%"><feGaussianBlur stdDeviation="6"/></filter><filter id="blur3" x="-200%" y="-200%" width="500%" height="500%"><feGaussianBlur stdDeviation="3.5"/></filter><filter id="blurN" x="-20%" y="-20%" width="140%" height="140%"><feGaussianBlur stdDeviation="1.6"/></filter></defs></svg>
<div class="lab" style="left:250.1px;width:194.9px;top:138.5px"><br>Amethyst</div>
<div class="lab" style="left:442.8px;width:194.9px;top:138.5px"><br>Lilac</div>
<div class="lab" style="left:637.6px;width:194.9px;top:138.5px"><br>Dusk Lavender</div>
<div class="lab" style="left:833.5px;width:194.9px;top:138.5px"><br>Lilac</div>
<div class="lab" style="left:1028.7px;width:194.9px;top:138.5px"><br>Violet</div>
<div class="lab" style="left:1225.5px;width:194.9px;top:138.5px"><br>Purple Orchid</div>
<div class="lab" style="left:1421.1px;width:194.9px;top:138.5px"><br>Violet</div>
<div class="lab" style="left:1616.4px;width:194.9px;top:138.5px"><br>Navy Blue</div>
<svg class="ab" style="left:262.8px;top:239px" width="169" height="234" viewBox="-4 -4 169 234"><defs><radialGradient id="g1" cx="0.55" cy="0.38" r="0.7"><stop offset="0" stop-color="#5e7ca2"/><stop offset="0.6" stop-color="#56769e"/><stop offset="1" stop-color="#4d6a8e"/></radialGradient><clipPath id="cg1"><path d="M80.5 0 C125 0 161 41 161 92 C161 150 100 213 80.5 213 C61 213 0 150 0 92 C0 41 36 0 80.5 0 Z"/></clipPath></defs><path d="M80.5 0 C125 0 161 41 161 92 C161 150 100 213 80.5 213 C61 213 0 150 0 92 C0 41 36 0 80.5 0 Z" fill="url(#g1)"/><g clip-path="url(#cg1)"><ellipse cx="77" cy="75" rx="33" ry="55" fill="#7b94b3" opacity="0.5" filter="url(#blur6)"/><path d="M29 78 Q31 125 46 155" stroke="#2b3b4f" stroke-width="13" fill="none" opacity="0.8" filter="url(#blur6)"/><path d="M117 115 Q112 150 103 182" stroke="#11171f" stroke-width="13" fill="none" opacity="0.95" filter="url(#blur6)"/><ellipse cx="98" cy="108" rx="6" ry="16" fill="#374c66" opacity="0.5" filter="url(#blur3)"/><ellipse cx="62" cy="110" rx="6" ry="16" fill="#374c66" opacity="0.45" filter="url(#blur3)"/><ellipse cx="145" cy="110" rx="10" ry="50" fill="#405876" opacity="0.45" filter="url(#blur6)"/><ellipse cx="80" cy="209" rx="8" ry="5" fill="#0c1117" opacity="0.8" filter="url(#blur2)"/><ellipse cx="75" cy="53" rx="9" ry="6" fill="#fff" opacity="0.80" filter="url(#blur2)"/><ellipse cx="58" cy="63" rx="6" ry="6" fill="#fff" opacity="0.80" filter="url(#blur2)"/><ellipse cx="97" cy="64" rx="6" ry="6" fill="#fff" opacity="0.80" filter="url(#blur2)"/><ellipse cx="82" cy="68" rx="4" ry="4" fill="#fff" opacity="0.80" filter="url(#blur2)"/><ellipse cx="94" cy="74" rx="4" ry="4" fill="#fff" opacity="0.80" filter="url(#blur2)"/><ellipse cx="77" cy="79" rx="3" ry="3" fill="#fff" opacity="0.80" filter="url(#blur2)"/><ellipse cx="76" cy="92" rx="6" ry="6" fill="#fff" opacity="0.80" filter="url(#blur2)"/></g><path d="M78.5 211 L82.5 211 L86 220.5 Q86.5 225.5 80.5 225.5 Q74.5 225.5 75 220.5 Z" fill="#374c66"/></svg>
<div class="lab" style="left:250.1px;width:194.9px;top:478.5px">940 Reflex<br>Blue</div>
<svg class="ab" style="left:455.0px;top:239px" width="169" height="234" viewBox="-4 -4 169 234"><defs><radialGradient id="g2" cx="0.55" cy="0.38" r="0.7"><stop offset="0" stop-color="#3763ac"/><stop offset="0.6" stop-color="#2d5ba8"/><stop offset="1" stop-color="#285197"/></radialGradient><clipPath id="cg2"><path d="M80.5 0 C125 0 161 41 161 92 C161 150 100 213 80.5 213 C61 213 0 150 0 92 C0 41 36 0 80.5 0 Z"/></clipPath></defs><path d="M80.5 0 C125 0 161 41 161 92 C161 150 100 213 80.5 213 C61 213 0 150 0 92 C0 41 36 0 80.5 0 Z" fill="url(#g2)"/><g clip-path="url(#cg2)"><path d="M125 41 Q142 57 143 90" stroke="#fff" stroke-width="9" stroke-linecap="round" fill="none" opacity="0.55" filter="url(#blur3)"/><path d="M45 10 Q80 -2 118 12" stroke="#fff" stroke-width="2" opacity="0.35" fill="none"/><path d="M135 190 Q150 160 155 130" stroke="#fff" stroke-width="3" opacity="0.35" fill="none"/><ellipse cx="80" cy="200" rx="16" ry="10" fill="#162d54" opacity="0.35" filter="url(#blur3)"/></g><path d="M78.5 211 L82.5 211 L86 220.5 Q86.5 225.5 80.5 225.5 Q74.5 225.5 75 220.5 Z" fill="#1d3b6d"/></svg>
<div class="lab" style="left:442.8px;width:194.9px;top:478.5px">540 Metallic<br>Blue</div>
<svg class="ab" style="left:650.2px;top:239px" width="169" height="234" viewBox="-4 -4 169 234"><defs><radialGradient id="g3" cx="0.55" cy="0.38" r="0.7"><stop offset="0" stop-color="#43539d"/><stop offset="0.6" stop-color="#3a4a98"/><stop offset="1" stop-color="#344288"/></radialGradient><clipPath id="cg3"><path d="M80.5 0 C125 0 161 41 161 92 C161 150 100 213 80.5 213 C61 213 0 150 0 92 C0 41 36 0 80.5 0 Z"/></clipPath></defs><path d="M80.5 0 C125 0 161 41 161 92 C161 150 100 213 80.5 213 C61 213 0 150 0 92 C0 41 36 0 80.5 0 Z" fill="url(#g3)"/><g clip-path="url(#cg3)"><path d="M125 41 Q142 57 143 90" stroke="#fff" stroke-width="9" stroke-linecap="round" fill="none" opacity="0.55" filter="url(#blur3)"/><path d="M45 10 Q80 -2 118 12" stroke="#fff" stroke-width="2" opacity="0.35" fill="none"/></g><path d="M78.5 211 L82.5 211 L86 220.5 Q86.5 225.5 80.5 225.5 Q74.5 225.5 75 220.5 Z" fill="#253062"/></svg>
<div class="lab" style="left:637.6px;width:194.9px;top:478.5px">041 Fashion<br>Royal Blue</div>
<svg class="ab" style="left:846.2px;top:239px" width="169" height="234" viewBox="-4 -4 169 234"><defs><radialGradient id="g4" cx="0.55" cy="0.38" r="0.7"><stop offset="0" stop-color="#2e566f"/><stop offset="0.6" stop-color="#244e68"/><stop offset="1" stop-color="#20465d"/></radialGradient><clipPath id="cg4"><path d="M80.5 0 C125 0 161 41 161 92 C161 150 100 213 80.5 213 C61 213 0 150 0 92 C0 41 36 0 80.5 0 Z"/></clipPath></defs><path d="M80.5 0 C125 0 161 41 161 92 C161 150 100 213 80.5 213 C61 213 0 150 0 92 C0 41 36 0 80.5 0 Z" fill="url(#g4)"/><g clip-path="url(#cg4)"><path d="M125 41 Q142 57 143 90" stroke="#fff" stroke-width="9" stroke-linecap="round" fill="none" opacity="0.55" filter="url(#blur3)"/><path d="M45 10 Q80 -2 118 12" stroke="#fff" stroke-width="2" opacity="0.35" fill="none"/></g><path d="M78.5 211 L82.5 211 L86 220.5 Q86.5 225.5 80.5 225.5 Q74.5 225.5 75 220.5 Z" fill="#173243"/></svg>
<div class="lab" style="left:833.5px;width:194.9px;top:478.5px">035 Fashion<br>Deep Teal</div>
<svg class="ab" style="left:1041.5px;top:239px" width="169" height="234" viewBox="-4 -4 169 234"><defs><radialGradient id="g5" cx="0.55" cy="0.38" r="0.7"><stop offset="0" stop-color="#768d91"/><stop offset="0.6" stop-color="#6f878c"/><stop offset="1" stop-color="#63797e"/></radialGradient><clipPath id="cg5"><path d="M80.5 0 C125 0 161 41 161 92 C161 150 100 213 80.5 213 C61 213 0 150 0 92 C0 41 36 0 80.5 0 Z"/></clipPath></defs><path d="M80.5 0 C125 0 161 41 161 92 C161 150 100 213 80.5 213 C61 213 0 150 0 92 C0 41 36 0 80.5 0 Z" fill="url(#g5)"/><g clip-path="url(#cg5)"><path d="M125 41 Q142 57 143 90" stroke="#fff" stroke-width="9" stroke-linecap="round" fill="none" opacity="0.55" filter="url(#blur3)"/><path d="M45 10 Q80 -2 118 12" stroke="#fff" stroke-width="2" opacity="0.35" fill="none"/></g><path d="M78.5 211 L82.5 211 L86 220.5 Q86.5 225.5 80.5 225.5 Q74.5 225.5 75 220.5 Z" fill="#48575b"/></svg>
<div class="lab" style="left:1028.7px;width:194.9px;top:478.5px">140 Pastel<br>Dusk Blue</div>
<svg class="ab" style="left:1239.0px;top:239px" width="169" height="234" viewBox="-4 -4 169 234"><defs><radialGradient id="g6" cx="0.55" cy="0.38" r="0.7"><stop offset="0" stop-color="#7e86c0"/><stop offset="0.6" stop-color="#7880bd"/><stop offset="1" stop-color="#6c73aa"/></radialGradient><clipPath id="cg6"><path d="M80.5 0 C125 0 161 41 161 92 C161 150 100 213 80.5 213 C61 213 0 150 0 92 C0 41 36 0 80.5 0 Z"/></clipPath></defs><path d="M80.5 0 C125 0 161 41 161 92 C161 150 100 213 80.5 213 C61 213 0 150 0 92 C0 41 36 0 80.5 0 Z" fill="url(#g6)"/><g clip-path="url(#cg6)"><path d="M125 41 Q142 57 143 90" stroke="#fff" stroke-width="9" stroke-linecap="round" fill="none" opacity="0.55" filter="url(#blur3)"/><path d="M45 10 Q80 -2 118 12" stroke="#fff" stroke-width="2" opacity="0.35" fill="none"/></g><path d="M78.5 211 L82.5 211 L86 220.5 Q86.5 225.5 80.5 225.5 Q74.5 225.5 75 220.5 Z" fill="#4e537a"/></svg>
<div class="lab" style="left:1225.5px;width:194.9px;top:478.5px">042 Fashion<br>Periwinkle Blue</div>
<svg class="ab" style="left:1433.7px;top:239px" width="169" height="234" viewBox="-4 -4 169 234"><defs><radialGradient id="g7" cx="0.55" cy="0.38" r="0.7"><stop offset="0" stop-color="#7194ce"/><stop offset="0.6" stop-color="#6a8fcc"/><stop offset="1" stop-color="#5f80b7"/></radialGradient><clipPath id="cg7"><path d="M80.5 0 C125 0 161 41 161 92 C161 150 100 213 80.5 213 C61 213 0 150 0 92 C0 41 36 0 80.5 0 Z"/></clipPath></defs><path d="M80.5 0 C125 0 161 41 161 92 C161 150 100 213 80.5 213 C61 213 0 150 0 92 C0 41 36 0 80.5 0 Z" fill="url(#g7)" filter="url(#blurN)"/><g clip-path="url(#cg7)"><path d="M125 41 Q142 57 143 90" stroke="#fff" stroke-width="9" stroke-linecap="round" fill="none" opacity="0.55" filter="url(#blur3)"/><path d="M45 10 Q80 -2 118 12" stroke="#fff" stroke-width="2" opacity="0.35" fill="none"/></g><path d="M78.5 211 L82.5 211 L86 220.5 Q86.5 225.5 80.5 225.5 Q74.5 225.5 75 220.5 Z" fill="#445c84"/></svg>
<div class="lab" style="left:1421.1px;width:194.9px;top:478.5px">240 Neon<br>Blue</div>
<svg class="ab" style="left:1625.0px;top:239px" width="169" height="234" viewBox="-4 -4 169 234"><defs><radialGradient id="g8" cx="0.55" cy="0.38" r="0.7"><stop offset="0" stop-color="#56a7da"/><stop offset="0.6" stop-color="#4ea3d9"/><stop offset="1" stop-color="#4692c3"/></radialGradient><clipPath id="cg8"><path d="M80.5 0 C125 0 161 41 161 92 C161 150 100 213 80.5 213 C61 213 0 150 0 92 C0 41 36 0 80.5 0 Z"/></clipPath></defs><path d="M80.5 0 C125 0 161 41 161 92 C161 150 100 213 80.5 213 C61 213 0 150 0 92 C0 41 36 0 80.5 0 Z" fill="url(#g8)"/><g clip-path="url(#cg8)"><path d="M125 41 Q142 57 143 90" stroke="#fff" stroke-width="9" stroke-linecap="round" fill="none" opacity="0.55" filter="url(#blur3)"/><path d="M45 10 Q80 -2 118 12" stroke="#fff" stroke-width="2" opacity="0.35" fill="none"/></g><path d="M78.5 211 L82.5 211 L86 220.5 Q86.5 225.5 80.5 225.5 Q74.5 225.5 75 220.5 Z" fill="#32698d"/></svg>
<div class="lab" style="left:1616.4px;width:194.9px;top:478.5px">040 Fashion<br>Blue</div>
<svg class="ab" style="left:262.5px;top:579px" width="169" height="234" viewBox="-4 -4 169 234"><defs><radialGradient id="g9" cx="0.55" cy="0.38" r="0.7"><stop offset="0" stop-color="#62abb3"/><stop offset="0.6" stop-color="#5aa7b0"/><stop offset="1" stop-color="#51969e"/></radialGradient><clipPath id="cg9"><path d="M80.5 0 C125 0 161 41 161 92 C161 150 100 213 80.5 213 C61 213 0 150 0 92 C0 41 36 0 80.5 0 Z"/></clipPath></defs><path d="M80.5 0 C125 0 161 41 161 92 C161 150 100 213 80.5 213 C61 213 0 150 0 92 C0 41 36 0 80.5 0 Z" fill="url(#g9)"/><g clip-path="url(#cg9)"><path d="M125 41 Q142 57 143 90" stroke="#fff" stroke-width="9" stroke-linecap="round" fill="none" opacity="0.55" filter="url(#blur3)"/><path d="M45 10 Q80 -2 118 12" stroke="#fff" stroke-width="2" opacity="0.35" fill="none"/></g><path d="M78.5 211 L82.5 211 L86 220.5 Q86.5 225.5 80.5 225.5 Q74.5 225.5 75 220.5 Z" fill="#3a6c72"/></svg>
<div class="lab" style="left:249.6px;width:194.9px;top:818.5px">038 Fashion<br>Caribbean Blue</div>
<svg class="ab" style="left:456.4px;top:579px" width="169" height="234" viewBox="-4 -4 169 234"><defs><radialGradient id="g10" cx="0.55" cy="0.38" r="0.7"><stop offset="0" stop-color="#bfd5e4"/><stop offset="0.6" stop-color="#bcd3e3"/><stop offset="1" stop-color="#a9bdcc"/></radialGradient><clipPath id="cg10"><path d="M80.5 0 C125 0 161 41 161 92 C161 150 100 213 80.5 213 C61 213 0 150 0 92 C0 41 36 0 80.5 0 Z"/></clipPath></defs><path d="M80.5 0 C125 0 161 41 161 92 C161 150 100 213 80.5 213 C61 213 0 150 0 92 C0 41 36 0 80.5 0 Z" fill="url(#g10)"/><g clip-path="url(#cg10)"><path d="M125 41 Q142 57 143 90" stroke="#fff" stroke-width="9" stroke-linecap="round" fill="none" opacity="0.55" filter="url(#blur3)"/><path d="M45 10 Q80 -2 118 12" stroke="#fff" stroke-width="2" opacity="0.35" fill="none"/><ellipse cx="45" cy="115" rx="16" ry="60" fill="#acc2d0" opacity="0.35" filter="url(#blur6)"/><ellipse cx="118" cy="115" rx="14" ry="55" fill="#acc2d0" opacity="0.35" filter="url(#blur6)"/></g><path d="M78.5 211 L82.5 211 L86 220.5 Q86.5 225.5 80.5 225.5 Q74.5 225.5 75 220.5 Z" fill="#7a8993"/></svg>
<div class="lab" style="left:444.5px;width:194.9px;top:818.5px">440 Pearl<br>Blue</div>
<svg class="ab" style="left:652.4px;top:579px" width="169" height="234" viewBox="-4 -4 169 234"><defs><radialGradient id="g11" cx="0.55" cy="0.38" r="0.7"><stop offset="0" stop-color="#819db8"/><stop offset="0.6" stop-color="#7b98b5"/><stop offset="1" stop-color="#6e88a2"/></radialGradient><clipPath id="cg11"><path d="M80.5 0 C125 0 161 41 161 92 C161 150 100 213 80.5 213 C61 213 0 150 0 92 C0 41 36 0 80.5 0 Z"/></clipPath></defs><path d="M80.5 0 C125 0 161 41 161 92 C161 150 100 213 80.5 213 C61 213 0 150 0 92 C0 41 36 0 80.5 0 Z" fill="url(#g11)"/><g clip-path="url(#cg11)"><ellipse cx="80" cy="170" rx="60" ry="45" fill="#95acc3" opacity="0.45" filter="url(#blur6)"/><ellipse cx="10" cy="110" rx="12" ry="70" fill="#566a7e" opacity="0.5" filter="url(#blur6)"/><ellipse cx="150" cy="110" rx="12" ry="60" fill="#566a7e" opacity="0.5" filter="url(#blur6)"/><ellipse cx="80" cy="60" rx="55" ry="45" fill="#8ea7c0" opacity="0.4" filter="url(#blur6)"/><circle cx="53" cy="32" r="8.5" fill="#fff" opacity="0.95" filter="url(#blur3)"/><circle cx="103" cy="44" r="8.5" fill="#fff" opacity="0.95" filter="url(#blur3)"/><circle cx="63" cy="56" r="8" fill="#fff" opacity="0.95" filter="url(#blur3)"/><circle cx="34" cy="64" r="7" fill="#fff" opacity="0.95" filter="url(#blur3)"/><circle cx="94" cy="66" r="7.5" fill="#fff" opacity="0.95" filter="url(#blur3)"/><circle cx="103" cy="97" r="8.5" fill="#fff" opacity="0.95" filter="url(#blur3)"/><circle cx="55" cy="85" r="5" fill="#fff" opacity="0.95" filter="url(#blur3)"/></g><path d="M78.5 211 L82.5 211 L86 220.5 Q86.5 225.5 80.5 225.5 Q74.5 225.5 75 220.5 Z" fill="#4f6275"/></svg>
<div class="lab" style="left:639.8px;width:194.9px;top:818.5px">839 Silk<br>Arctic Blue</div>
<svg class="ab" style="left:847.4px;top:579px" width="169" height="234" viewBox="-4 -4 169 234"><defs><radialGradient id="g12" cx="0.55" cy="0.38" r="0.7"><stop offset="0" stop-color="#bcd7ec"/><stop offset="0.6" stop-color="#b9d5ec"/><stop offset="1" stop-color="#a6bfd4"/></radialGradient><clipPath id="cg12"><path d="M80.5 0 C125 0 161 41 161 92 C161 150 100 213 80.5 213 C61 213 0 150 0 92 C0 41 36 0 80.5 0 Z"/></clipPath></defs><path d="M80.5 0 C125 0 161 41 161 92 C161 150 100 213 80.5 213 C61 213 0 150 0 92 C0 41 36 0 80.5 0 Z" fill="url(#g12)"/><g clip-path="url(#cg12)"><path d="M125 41 Q142 57 143 90" stroke="#fff" stroke-width="9" stroke-linecap="round" fill="none" opacity="0.55" filter="url(#blur3)"/><path d="M45 10 Q80 -2 118 12" stroke="#fff" stroke-width="2" opacity="0.35" fill="none"/></g><path d="M78.5 211 L82.5 211 L86 220.5 Q86.5 225.5 80.5 225.5 Q74.5 225.5 75 220.5 Z" fill="#788a99"/></svg>
<div class="lab" style="left:834.8px;width:194.9px;top:818.5px">640 Pastel<br>Matte Blue</div>
<svg class="ab" style="left:1044.2px;top:579px" width="169" height="234" viewBox="-4 -4 169 234"><defs><radialGradient id="g13" cx="0.55" cy="0.38" r="0.7"><stop offset="0" stop-color="#a3babb"/><stop offset="0.6" stop-color="#9fb7b8"/><stop offset="1" stop-color="#8fa4a5"/></radialGradient><clipPath id="cg13"><path d="M80.5 0 C125 0 161 41 161 92 C161 150 100 213 80.5 213 C61 213 0 150 0 92 C0 41 36 0 80.5 0 Z"/></clipPath></defs><path d="M80.5 0 C125 0 161 41 161 92 C161 150 100 213 80.5 213 C61 213 0 150 0 92 C0 41 36 0 80.5 0 Z" fill="url(#g13)"/><g clip-path="url(#cg13)"><ellipse cx="80" cy="170" rx="60" ry="45" fill="#b2c5c6" opacity="0.45" filter="url(#blur6)"/><ellipse cx="10" cy="110" rx="12" ry="70" fill="#6f8080" opacity="0.5" filter="url(#blur6)"/><ellipse cx="150" cy="110" rx="12" ry="60" fill="#6f8080" opacity="0.5" filter="url(#blur6)"/><ellipse cx="80" cy="60" rx="55" ry="45" fill="#adc1c2" opacity="0.4" filter="url(#blur6)"/><circle cx="53" cy="32" r="8.5" fill="#fff" opacity="0.95" filter="url(#blur3)"/><circle cx="103" cy="44" r="8.5" fill="#fff" opacity="0.95" filter="url(#blur3)"/><circle cx="63" cy="56" r="8" fill="#fff" opacity="0.95" filter="url(#blur3)"/><circle cx="34" cy="64" r="7" fill="#fff" opacity="0.95" filter="url(#blur3)"/><circle cx="94" cy="66" r="7.5" fill="#fff" opacity="0.95" filter="url(#blur3)"/><circle cx="103" cy="97" r="8.5" fill="#fff" opacity="0.95" filter="url(#blur3)"/><circle cx="55" cy="85" r="5" fill="#fff" opacity="0.95" filter="url(#blur3)"/></g><path d="M78.5 211 L82.5 211 L86 220.5 Q86.5 225.5 80.5 225.5 Q74.5 225.5 75 220.5 Z" fill="#677677"/></svg>
<div class="lab" style="left:1031.5px;width:194.9px;top:818.5px">826 Silk<br>Cool Mint</div>
<svg class="ab" style="left:1239.4px;top:579px" width="169" height="234" viewBox="-4 -4 169 234"><defs><radialGradient id="g14" cx="0.55" cy="0.38" r="0.7"><stop offset="0" stop-color="#79b7ad"/><stop offset="0.6" stop-color="#72b4a9"/><stop offset="1" stop-color="#66a298"/></radialGradient><clipPath id="cg14"><path d="M80.5 0 C125 0 161 41 161 92 C161 150 100 213 80.5 213 C61 213 0 150 0 92 C0 41 36 0 80.5 0 Z"/></clipPath></defs><path d="M80.5 0 C125 0 161 41 161 92 C161 150 100 213 80.5 213 C61 213 0 150 0 92 C0 41 36 0 80.5 0 Z" fill="url(#g14)"/><g clip-path="url(#cg14)"><path d="M125 41 Q142 57 143 90" stroke="#fff" stroke-width="9" stroke-linecap="round" fill="none" opacity="0.55" filter="url(#blur3)"/><path d="M45 10 Q80 -2 118 12" stroke="#fff" stroke-width="2" opacity="0.35" fill="none"/></g><path d="M78.5 211 L82.5 211 L86 220.5 Q86.5 225.5 80.5 225.5 Q74.5 225.5 75 220.5 Z" fill="#4a756d"/></svg>
<div class="lab" style="left:1227.0px;width:194.9px;top:818.5px">037 Fashion<br>Aquamarina</div>
<svg class="ab" style="left:1434.3px;top:579px" width="169" height="234" viewBox="-4 -4 169 234"><defs><radialGradient id="g15" cx="0.55" cy="0.38" r="0.7"><stop offset="0" stop-color="#397b6d"/><stop offset="0.6" stop-color="#2f7566"/><stop offset="1" stop-color="#2a695b"/></radialGradient><clipPath id="cg15"><path d="M80.5 0 C125 0 161 41 161 92 C161 150 100 213 80.5 213 C61 213 0 150 0 92 C0 41 36 0 80.5 0 Z"/></clipPath></defs><path d="M80.5 0 C125 0 161 41 161 92 C161 150 100 213 80.5 213 C61 213 0 150 0 92 C0 41 36 0 80.5 0 Z" fill="url(#g15)"/><g clip-path="url(#cg15)"><ellipse cx="80" cy="170" rx="60" ry="45" fill="#589084" opacity="0.45" filter="url(#blur6)"/><ellipse cx="10" cy="110" rx="12" ry="70" fill="#205147" opacity="0.5" filter="url(#blur6)"/><ellipse cx="150" cy="110" rx="12" ry="60" fill="#205147" opacity="0.5" filter="url(#blur6)"/><ellipse cx="80" cy="60" rx="55" ry="45" fill="#4e897c" opacity="0.4" filter="url(#blur6)"/><circle cx="53" cy="32" r="8.5" fill="#fff" opacity="0.95" filter="url(#blur3)"/><circle cx="103" cy="44" r="8.5" fill="#fff" opacity="0.95" filter="url(#blur3)"/><circle cx="63" cy="56" r="8" fill="#fff" opacity="0.95" filter="url(#blur3)"/><circle cx="34" cy="64" r="7" fill="#fff" opacity="0.95" filter="url(#blur3)"/><circle cx="94" cy="66" r="7.5" fill="#fff" opacity="0.95" filter="url(#blur3)"/><circle cx="103" cy="97" r="8.5" fill="#fff" opacity="0.95" filter="url(#blur3)"/><circle cx="55" cy="85" r="5" fill="#fff" opacity="0.95" filter="url(#blur3)"/></g><path d="M78.5 211 L82.5 211 L86 220.5 Q86.5 225.5 80.5 225.5 Q74.5 225.5 75 220.5 Z" fill="#1e4c42"/></svg>
<div class="lab" style="left:1423.2px;width:194.9px;top:818.5px">932 Reflex<br>Aurora Green</div>
<svg class="ab" style="left:1629.1px;top:579px" width="169" height="234" viewBox="-4 -4 169 234"><defs><radialGradient id="g16" cx="0.55" cy="0.38" r="0.7"><stop offset="0" stop-color="#b6d3b8"/><stop offset="0.6" stop-color="#b3d1b5"/><stop offset="1" stop-color="#a1bca2"/></radialGradient><clipPath id="cg16"><path d="M80.5 0 C125 0 161 41 161 92 C161 150 100 213 80.5 213 C61 213 0 150 0 92 C0 41 36 0 80.5 0 Z"/></clipPath></defs><path d="M80.5 0 C125 0 161 41 161 92 C161 150 100 213 80.5 213 C61 213 0 150 0 92 C0 41 36 0 80.5 0 Z" fill="url(#g16)"/><g clip-path="url(#cg16)"><path d="M125 41 Q142 57 143 90" stroke="#fff" stroke-width="9" stroke-linecap="round" fill="none" opacity="0.55" filter="url(#blur3)"/><path d="M45 10 Q80 -2 118 12" stroke="#fff" stroke-width="2" opacity="0.35" fill="none"/></g><path d="M78.5 211 L82.5 211 L86 220.5 Q86.5 225.5 80.5 225.5 Q74.5 225.5 75 220.5 Z" fill="#748775"/></svg>
<div class="lab" style="left:1616.5px;width:194.9px;top:818.5px">126 Pastel Dusk<br>Green Tea</div>
<svg class="ab" style="left:262.5px;top:919px" width="169" height="234" viewBox="-4 -4 169 234"><defs><radialGradient id="g17" cx="0.55" cy="0.38" r="0.7"><stop offset="0" stop-color="#d8e8d9"/><stop offset="0.6" stop-color="#d6e7d8"/><stop offset="1" stop-color="#c0cfc2"/></radialGradient><clipPath id="cg17"><path d="M80.5 0 C125 0 161 41 161 92 C161 150 100 213 80.5 213 C61 213 0 150 0 92 C0 41 36 0 80.5 0 Z"/></clipPath></defs><path d="M80.5 0 C125 0 161 41 161 92 C161 150 100 213 80.5 213 C61 213 0 150 0 92 C0 41 36 0 80.5 0 Z" fill="url(#g17)"/><g clip-path="url(#cg17)"><path d="M125 41 Q142 57 143 90" stroke="#fff" stroke-width="9" stroke-linecap="round" fill="none" opacity="0.55" filter="url(#blur3)"/><path d="M45 10 Q80 -2 118 12" stroke="#fff" stroke-width="2" opacity="0.35" fill="none"/></g><path d="M78.5 211 L82.5 211 L86 220.5 Q86.5 225.5 80.5 225.5 Q74.5 225.5 75 220.5 Z" fill="#8b968c"/></svg>
<div class="lab" style="left:249.6px;width:194.9px;top:1158.5px">630 Pastel<br>Matte Green</div>
<svg class="ab" style="left:456.9px;top:919px" width="169" height="234" viewBox="-4 -4 169 234"><defs><radialGradient id="g18" cx="0.55" cy="0.38" r="0.7"><stop offset="0" stop-color="#c0d5a6"/><stop offset="0.6" stop-color="#bdd3a2"/><stop offset="1" stop-color="#aabd91"/></radialGradient><clipPath id="cg18"><path d="M80.5 0 C125 0 161 41 161 92 C161 150 100 213 80.5 213 C61 213 0 150 0 92 C0 41 36 0 80.5 0 Z"/></clipPath></defs><path d="M80.5 0 C125 0 161 41 161 92 C161 150 100 213 80.5 213 C61 213 0 150 0 92 C0 41 36 0 80.5 0 Z" fill="url(#g18)"/><g clip-path="url(#cg18)"><path d="M125 41 Q142 57 143 90" stroke="#fff" stroke-width="9" stroke-linecap="round" fill="none" opacity="0.55" filter="url(#blur3)"/><path d="M45 10 Q80 -2 118 12" stroke="#fff" stroke-width="2" opacity="0.35" fill="none"/><ellipse cx="45" cy="115" rx="16" ry="60" fill="#adc295" opacity="0.35" filter="url(#blur6)"/><ellipse cx="118" cy="115" rx="14" ry="55" fill="#adc295" opacity="0.35" filter="url(#blur6)"/></g><path d="M78.5 211 L82.5 211 L86 220.5 Q86.5 225.5 80.5 225.5 Q74.5 225.5 75 220.5 Z" fill="#7a8969"/></svg>
<div class="lab" style="left:443.6px;width:194.9px;top:1158.5px">430 Pearl<br>Green</div>
<svg class="ab" style="left:651.9px;top:919px" width="169" height="234" viewBox="-4 -4 169 234"><defs><radialGradient id="g19" cx="0.55" cy="0.38" r="0.7"><stop offset="0" stop-color="#67ac7d"/><stop offset="0.6" stop-color="#60a877"/><stop offset="1" stop-color="#56976b"/></radialGradient><clipPath id="cg19"><path d="M80.5 0 C125 0 161 41 161 92 C161 150 100 213 80.5 213 C61 213 0 150 0 92 C0 41 36 0 80.5 0 Z"/></clipPath></defs><path d="M80.5 0 C125 0 161 41 161 92 C161 150 100 213 80.5 213 C61 213 0 150 0 92 C0 41 36 0 80.5 0 Z" fill="url(#g19)"/><g clip-path="url(#cg19)"><path d="M125 41 Q142 57 143 90" stroke="#fff" stroke-width="9" stroke-linecap="round" fill="none" opacity="0.55" filter="url(#blur3)"/><path d="M45 10 Q80 -2 118 12" stroke="#fff" stroke-width="2" opacity="0.35" fill="none"/></g><path d="M78.5 211 L82.5 211 L86 220.5 Q86.5 225.5 80.5 225.5 Q74.5 225.5 75 220.5 Z" fill="#3e6d4d"/></svg>
<div class="lab" style="left:638.9px;width:194.9px;top:1158.5px">030 Fashion<br>Green</div>
<svg class="ab" style="left:847.4px;top:919px" width="169" height="234" viewBox="-4 -4 169 234"><defs><radialGradient id="g20" cx="0.55" cy="0.38" r="0.7"><stop offset="0" stop-color="#98a37b"/><stop offset="0.6" stop-color="#939f75"/><stop offset="1" stop-color="#848f69"/></radialGradient><clipPath id="cg20"><path d="M80.5 0 C125 0 161 41 161 92 C161 150 100 213 80.5 213 C61 213 0 150 0 92 C0 41 36 0 80.5 0 Z"/></clipPath></defs><path d="M80.5 0 C125 0 161 41 161 92 C161 150 100 213 80.5 213 C61 213 0 150 0 92 C0 41 36 0 80.5 0 Z" fill="url(#g20)"/><g clip-path="url(#cg20)"><path d="M125 41 Q142 57 143 90" stroke="#fff" stroke-width="9" stroke-linecap="round" fill="none" opacity="0.55" filter="url(#blur3)"/><path d="M45 10 Q80 -2 118 12" stroke="#fff" stroke-width="2" opacity="0.35" fill="none"/></g><path d="M78.5 211 L82.5 211 L86 220.5 Q86.5 225.5 80.5 225.5 Q74.5 225.5 75 220.5 Z" fill="#5f674c"/></svg>
<div class="lab" style="left:834.5px;width:194.9px;top:1158.5px">027 Fashion<br>Eucalyptus</div>
<svg class="ab" style="left:1042.8px;top:919px" width="169" height="234" viewBox="-4 -4 169 234"><defs><radialGradient id="g21" cx="0.55" cy="0.38" r="0.7"><stop offset="0" stop-color="#98be5a"/><stop offset="0.6" stop-color="#93bb52"/><stop offset="1" stop-color="#84a849"/></radialGradient><clipPath id="cg21"><path d="M80.5 0 C125 0 161 41 161 92 C161 150 100 213 80.5 213 C61 213 0 150 0 92 C0 41 36 0 80.5 0 Z"/></clipPath></defs><path d="M80.5 0 C125 0 161 41 161 92 C161 150 100 213 80.5 213 C61 213 0 150 0 92 C0 41 36 0 80.5 0 Z" fill="url(#g21)"/><g clip-path="url(#cg21)"><path d="M125 41 Q142 57 143 90" stroke="#fff" stroke-width="9" stroke-linecap="round" fill="none" opacity="0.55" filter="url(#blur3)"/><path d="M45 10 Q80 -2 118 12" stroke="#fff" stroke-width="2" opacity="0.35" fill="none"/></g><path d="M78.5 211 L82.5 211 L86 220.5 Q86.5 225.5 80.5 225.5 Q74.5 225.5 75 220.5 Z" fill="#5f7935"/></svg>
<div class="lab" style="left:1029.8px;width:194.9px;top:1158.5px">031 Fashion<br>Lime Green</div>
<svg class="ab" style="left:1239.0px;top:919px" width="169" height="234" viewBox="-4 -4 169 234"><defs><radialGradient id="g22" cx="0.55" cy="0.38" r="0.7"><stop offset="0" stop-color="#a4c341"/><stop offset="0.6" stop-color="#a0c038"/><stop offset="1" stop-color="#90ac32"/></radialGradient><clipPath id="cg22"><path d="M80.5 0 C125 0 161 41 161 92 C161 150 100 213 80.5 213 C61 213 0 150 0 92 C0 41 36 0 80.5 0 Z"/></clipPath></defs><path d="M80.5 0 C125 0 161 41 161 92 C161 150 100 213 80.5 213 C61 213 0 150 0 92 C0 41 36 0 80.5 0 Z" fill="url(#g22)" filter="url(#blurN)"/><g clip-path="url(#cg22)"><path d="M125 41 Q142 57 143 90" stroke="#fff" stroke-width="9" stroke-linecap="round" fill="none" opacity="0.55" filter="url(#blur3)"/><path d="M45 10 Q80 -2 118 12" stroke="#fff" stroke-width="2" opacity="0.35" fill="none"/></g><path d="M78.5 211 L82.5 211 L86 220.5 Q86.5 225.5 80.5 225.5 Q74.5 225.5 75 220.5 Z" fill="#687c24"/></svg>
<div class="lab" style="left:1225.3px;width:194.9px;top:1158.5px">230 Neon<br>Green</div>
<svg class="ab" style="left:1433.6px;top:919px" width="169" height="234" viewBox="-4 -4 169 234"><defs><radialGradient id="g23" cx="0.55" cy="0.38" r="0.7"><stop offset="0" stop-color="#8f9a67"/><stop offset="0.6" stop-color="#8a9560"/><stop offset="1" stop-color="#7c8656"/></radialGradient><clipPath id="cg23"><path d="M80.5 0 C125 0 161 41 161 92 C161 150 100 213 80.5 213 C61 213 0 150 0 92 C0 41 36 0 80.5 0 Z"/></clipPath></defs><path d="M80.5 0 C125 0 161 41 161 92 C161 150 100 213 80.5 213 C61 213 0 150 0 92 C0 41 36 0 80.5 0 Z" fill="url(#g23)"/><g clip-path="url(#cg23)"><ellipse cx="77" cy="75" rx="33" ry="55" fill="#a3ac82" opacity="0.225" filter="url(#blur6)"/><path d="M29 78 Q31 125 46 155" stroke="#454a30" stroke-width="13" fill="none" opacity="0.36000000000000004" filter="url(#blur6)"/><path d="M117 115 Q112 150 103 182" stroke="#1b1d13" stroke-width="13" fill="none" opacity="0.4275" filter="url(#blur6)"/><ellipse cx="98" cy="108" rx="6" ry="16" fill="#59603e" opacity="0.225" filter="url(#blur3)"/><ellipse cx="62" cy="110" rx="6" ry="16" fill="#59603e" opacity="0.2025" filter="url(#blur3)"/><ellipse cx="145" cy="110" rx="10" ry="50" fill="#676f48" opacity="0.2025" filter="url(#blur6)"/><ellipse cx="80" cy="209" rx="8" ry="5" fill="#14160e" opacity="0.36000000000000004" filter="url(#blur2)"/><ellipse cx="75" cy="53" rx="9" ry="6" fill="#fff" opacity="0.36" filter="url(#blur2)"/><ellipse cx="58" cy="63" rx="6" ry="6" fill="#fff" opacity="0.36" filter="url(#blur2)"/><ellipse cx="97" cy="64" rx="6" ry="6" fill="#fff" opacity="0.36" filter="url(#blur2)"/><ellipse cx="82" cy="68" rx="4" ry="4" fill="#fff" opacity="0.36" filter="url(#blur2)"/><ellipse cx="94" cy="74" rx="4" ry="4" fill="#fff" opacity="0.36" filter="url(#blur2)"/><ellipse cx="77" cy="79" rx="3" ry="3" fill="#fff" opacity="0.36" filter="url(#blur2)"/><ellipse cx="76" cy="92" rx="6" ry="6" fill="#fff" opacity="0.36" filter="url(#blur2)"/></g><path d="M78.5 211 L82.5 211 L86 220.5 Q86.5 225.5 80.5 225.5 Q74.5 225.5 75 220.5 Z" fill="#59603e"/></svg>
<div class="lab" style="left:1420.2px;width:194.9px;top:1158.5px">931 Reflex<br>Lime Green</div>
<svg class="ab" style="left:1629.1px;top:919px" width="169" height="234" viewBox="-4 -4 169 234"><defs><radialGradient id="g24" cx="0.55" cy="0.38" r="0.7"><stop offset="0" stop-color="#53a138"/><stop offset="0.6" stop-color="#4a9d2e"/><stop offset="1" stop-color="#428d29"/></radialGradient><clipPath id="cg24"><path d="M80.5 0 C125 0 161 41 161 92 C161 150 100 213 80.5 213 C61 213 0 150 0 92 C0 41 36 0 80.5 0 Z"/></clipPath></defs><path d="M80.5 0 C125 0 161 41 161 92 C161 150 100 213 80.5 213 C61 213 0 150 0 92 C0 41 36 0 80.5 0 Z" fill="url(#g24)"/><g clip-path="url(#cg24)"><path d="M125 41 Q142 57 143 90" stroke="#fff" stroke-width="9" stroke-linecap="round" fill="none" opacity="0.55" filter="url(#blur3)"/><path d="M45 10 Q80 -2 118 12" stroke="#fff" stroke-width="2" opacity="0.35" fill="none"/></g><path d="M78.5 211 L82.5 211 L86 220.5 Q86.5 225.5 80.5 225.5 Q74.5 225.5 75 220.5 Z" fill="#30661d"/></svg>
<div class="lab" style="left:1615.8px;width:194.9px;top:1158.5px">029 Fashion<br>Shamrock Green</div>
<div class="ab" style="left:250.4px;top:228px;width:1558.9px;height:1px;background:#3c6cff"></div>
<div class="ab" style="left:250.4px;top:478px;width:1558.9px;height:1px;background:#3c6cff"></div>
<div class="ab" style="left:249.4px;top:228px;width:1px;height:251px;background:#3c6cff"></div>
<div class="ab" style="left:444.3px;top:228px;width:1px;height:251px;background:#3c6cff"></div>
<div class="ab" style="left:639.1px;top:228px;width:1px;height:251px;background:#3c6cff"></div>
<div class="ab" style="left:834.0px;top:228px;width:1px;height:251px;background:#3c6cff"></div>
<div class="ab" style="left:1028.8px;top:228px;width:1px;height:251px;background:#3c6cff"></div>
<div class="ab" style="left:1223.7px;top:228px;width:1px;height:251px;background:#3c6cff"></div>
<div class="ab" style="left:1418.6px;top:228px;width:1px;height:251px;background:#3c6cff"></div>
<div class="ab" style="left:1613.4px;top:228px;width:1px;height:251px;background:#3c6cff"></div>
<div class="ab" style="left:1808.3px;top:228px;width:1px;height:251px;background:#3c6cff"></div>
<div class="ab" style="left:250.4px;top:568px;width:1558.9px;height:1px;background:#3c6cff"></div>
<div class="ab" style="left:250.4px;top:818px;width:1558.9px;height:1px;background:#3c6cff"></div>
<div class="ab" style="left:249.4px;top:568px;width:1px;height:251px;background:#3c6cff"></div>
<div class="ab" style="left:444.3px;top:568px;width:1px;height:251px;background:#3c6cff"></div>
<div class="ab" style="left:639.1px;top:568px;width:1px;height:251px;background:#3c6cff"></div>
<div class="ab" style="left:834.0px;top:568px;width:1px;height:251px;background:#3c6cff"></div>
<div class="ab" style="left:1028.8px;top:568px;width:1px;height:251px;background:#3c6cff"></div>
<div class="ab" style="left:1223.7px;top:568px;width:1px;height:251px;background:#3c6cff"></div>
<div class="ab" style="left:1418.6px;top:568px;width:1px;height:251px;background:#3c6cff"></div>
<div class="ab" style="left:1613.4px;top:568px;width:1px;height:251px;background:#3c6cff"></div>
<div class="ab" style="left:1808.3px;top:568px;width:1px;height:251px;background:#3c6cff"></div>
<div class="ab" style="left:250.4px;top:908px;width:1558.9px;height:1px;background:#3c6cff"></div>
<div class="ab" style="left:250.4px;top:1158px;width:1558.9px;height:1px;background:#3c6cff"></div>
<div class="ab" style="left:249.4px;top:908px;width:1px;height:251px;background:#3c6cff"></div>
<div class="ab" style="left:444.3px;top:908px;width:1px;height:251px;background:#3c6cff"></div>
<div class="ab" style="left:639.1px;top:908px;width:1px;height:251px;background:#3c6cff"></div>
<div class="ab" style="left:834.0px;top:908px;width:1px;height:251px;background:#3c6cff"></div>
<div class="ab" style="left:1028.8px;top:908px;width:1px;height:251px;background:#3c6cff"></div>
<div class="ab" style="left:1223.7px;top:908px;width:1px;height:251px;background:#3c6cff"></div>
<div class="ab" style="left:1418.6px;top:908px;width:1px;height:251px;background:#3c6cff"></div>
<div class="ab" style="left:1613.4px;top:908px;width:1px;height:251px;background:#3c6cff"></div>
<div class="ab" style="left:1808.3px;top:908px;width:1px;height:251px;background:#3c6cff"></div>
<div class="ab" style="left:250.4px;top:1248px;width:1558.9px;height:1px;background:#3c6cff"></div>
<div class="ab" style="left:249.4px;top:1248px;width:1px;height:20px;background:#3c6cff"></div>
<div class="ab" style="left:444.3px;top:1248px;width:1px;height:20px;background:#3c6cff"></div>
<div class="ab" style="left:639.1px;top:1248px;width:1px;height:20px;background:#3c6cff"></div>
<div class="ab" style="left:834.0px;top:1248px;width:1px;height:20px;background:#3c6cff"></div>
<div class="ab" style="left:1028.8px;top:1248px;width:1px;height:20px;background:#3c6cff"></div>
<div class="ab" style="left:1223.7px;top:1248px;width:1px;height:20px;background:#3c6cff"></div>
<div class="ab" style="left:1418.6px;top:1248px;width:1px;height:20px;background:#3c6cff"></div>
<div class="ab" style="left:1613.4px;top:1248px;width:1px;height:20px;background:#3c6cff"></div>
<div class="ab" style="left:1808.3px;top:1248px;width:1px;height:20px;background:#3c6cff"></div>
<div class="ab" style="left:249.4px;top:163px;width:1px;height:66px;border-left:1px dotted #3c6cff"></div>
<div class="ab" style="left:639.1px;top:163px;width:1px;height:66px;border-left:1px dotted #3c6cff"></div>
<div class="ab" style="left:1613.4px;top:163px;width:1px;height:66px;border-left:1px dotted #3c6cff"></div>
<div class="ab" style="left:1808.3px;top:163px;width:1px;height:66px;border-left:1px dotted #3c6cff"></div>
<div class="ab" style="left:249.4px;top:479px;width:1px;height:90px;border-left:1px dotted #3c6cff"></div>
<div class="ab" style="left:639.1px;top:479px;width:1px;height:90px;border-left:1px dotted #3c6cff"></div>
<div class="ab" style="left:1613.4px;top:479px;width:1px;height:90px;border-left:1px dotted #3c6cff"></div>
<div class="ab" style="left:1808.3px;top:479px;width:1px;height:90px;border-left:1px dotted #3c6cff"></div>
<div class="ab" style="left:249.4px;top:819px;width:1px;height:90px;border-left:1px dotted #3c6cff"></div>
<div class="ab" style="left:639.1px;top:819px;width:1px;height:90px;border-left:1px dotted #3c6cff"></div>
<div class="ab" style="left:1613.4px;top:819px;width:1px;height:90px;border-left:1px dotted #3c6cff"></div>
<div class="ab" style="left:1808.3px;top:819px;width:1px;height:90px;border-left:1px dotted #3c6cff"></div>
<div class="ab" style="left:249.4px;top:1159px;width:1px;height:90px;border-left:1px dotted #3c6cff"></div>
<div class="ab" style="left:639.1px;top:1159px;width:1px;height:90px;border-left:1px dotted #3c6cff"></div>
<div class="ab" style="left:1613.4px;top:1159px;width:1px;height:90px;border-left:1px dotted #3c6cff"></div>
<div class="ab" style="left:1808.3px;top:1159px;width:1px;height:90px;border-left:1px dotted #3c6cff"></div>
<div class="ab" style="left:169px;top:163px;width:1px;height:1100px;border-left:1px dotted #3c6cff"></div>
<div class="ab" style="left:1889px;top:163px;width:1px;height:1100px;border-left:1px dotted #3c6cff"></div>
<div class="ab" style="left:92px;top:228.5px;width:1986px;height:1.6px;background:#3ef0f8"></div>
<div class="ab" style="left:92px;top:478.5px;width:1986px;height:1.6px;background:#3ef0f8"></div>
<div class="ab" style="left:92px;top:568.5px;width:1986px;height:1.6px;background:#3ef0f8"></div>
<div class="ab" style="left:92px;top:818.5px;width:1986px;height:1.6px;background:#3ef0f8"></div>
<div class="ab" style="left:92px;top:908.5px;width:1986px;height:1.6px;background:#3ef0f8"></div>
<div class="ab" style="left:92px;top:1158.5px;width:1986px;height:1.6px;background:#3ef0f8"></div>
<div class="ab" style="left:92px;top:1248.5px;width:1986px;height:1.6px;background:#3ef0f8"></div>
<div class="ab" style="left:250.1px;top:163px;width:1.5px;height:1100px;background:#3ef0f8"></div>
<div class="ab" style="left:445.0px;top:163px;width:1.5px;height:1100px;background:#3ef0f8"></div>
<div class="ab" style="left:639.8px;top:163px;width:1.5px;height:1100px;background:#3ef0f8"></div>
<div class="ab" style="left:834.7px;top:163px;width:1.5px;height:1100px;background:#3ef0f8"></div>
<div class="ab" style="left:1029.5px;top:163px;width:1.5px;height:1100px;background:#3ef0f8"></div>
<div class="ab" style="left:1224.4px;top:163px;width:1.5px;height:1100px;background:#3ef0f8"></div>
<div class="ab" style="left:1419.3px;top:163px;width:1.5px;height:1100px;background:#3ef0f8"></div>
<div class="ab" style="left:1614.1px;top:163px;width:1.5px;height:1100px;background:#3ef0f8"></div>
<div class="ab" style="left:1809.0px;top:163px;width:1.5px;height:1100px;background:#3ef0f8"></div>
<div class="ab" style="left:249.4px;top:1247.5px;width:1558.9px;height:1.3px;background:#c8860a"></div>
<div class="ab" style="left:249.4px;top:1248px;width:1.3px;height:15px;background:#c8860a"></div>
<div class="ab" style="left:444.3px;top:1248px;width:1.3px;height:15px;background:#c8860a"></div>
<div class="ab" style="left:639.1px;top:1248px;width:1.3px;height:15px;background:#c8860a"></div>
<div class="ab" style="left:834.0px;top:1248px;width:1.3px;height:15px;background:#c8860a"></div>
<div class="ab" style="left:1028.8px;top:1248px;width:1.3px;height:15px;background:#c8860a"></div>
<div class="ab" style="left:1223.7px;top:1248px;width:1.3px;height:15px;background:#c8860a"></div>
<div class="ab" style="left:1418.6px;top:1248px;width:1.3px;height:15px;background:#c8860a"></div>
<div class="ab" style="left:1613.4px;top:1248px;width:1.3px;height:15px;background:#c8860a"></div>
<div class="ab" style="left:1808.3px;top:1248px;width:1.3px;height:15px;background:#c8860a"></div>
<div class="ab" style="left:246.4px;top:1245px;width:6px;height:6px;background:#c8860a"></div>
<div class="ab" style="left:343.8px;top:1245px;width:6px;height:6px;background:#c8860a"></div>
<div class="ab" style="left:441.3px;top:1245px;width:6px;height:6px;background:#c8860a"></div>
<div class="ab" style="left:538.7px;top:1245px;width:6px;height:6px;background:#c8860a"></div>
<div class="ab" style="left:636.1px;top:1245px;width:6px;height:6px;background:#c8860a"></div>
<div class="ab" style="left:733.6px;top:1245px;width:6px;height:6px;background:#c8860a"></div>
<div class="ab" style="left:831.0px;top:1245px;width:6px;height:6px;background:#c8860a"></div>
<div class="ab" style="left:928.4px;top:1245px;width:6px;height:6px;background:#c8860a"></div>
<div class="ab" style="left:1025.8px;top:1245px;width:6px;height:6px;background:#c8860a"></div>
<div class="ab" style="left:1123.3px;top:1245px;width:6px;height:6px;background:#c8860a"></div>
<div class="ab" style="left:1220.7px;top:1245px;width:6px;height:6px;background:#c8860a"></div>
<div class="ab" style="left:1318.1px;top:1245px;width:6px;height:6px;background:#c8860a"></div>
<div class="ab" style="left:1415.6px;top:1245px;width:6px;height:6px;background:#c8860a"></div>
<div class="ab" style="left:1513.0px;top:1245px;width:6px;height:6px;background:#c8860a"></div>
<div class="ab" style="left:1610.4px;top:1245px;width:6px;height:6px;background:#c8860a"></div>
<div class="ab" style="left:1707.9px;top:1245px;width:6px;height:6px;background:#c8860a"></div>
<div class="ab" style="left:1805.3px;top:1245px;width:6px;height:6px;background:#c8860a"></div>
<div class="bd" style="left:249.4px;top:229px;width:15px">94</div>
<div class="bd" style="left:265.4px;top:229px;width:15px"><svg width="15" height="11" style="display:block"><rect x="2.5" y="2" width="10" height="7" fill="none" stroke="#fff" stroke-width="1.1"/><path d="M2.5 2 L7.5 6 L12.5 2" fill="none" stroke="#fff" stroke-width="1"/></svg></div>
<div class="bg" style="left:281.4px;top:229px;width:7px;font-size:9px">$</div>
<div class="bd" style="left:444.3px;top:229px;width:15px">95</div>
<div class="bd" style="left:460.3px;top:229px;width:15px"><svg width="15" height="11" style="display:block"><rect x="2.5" y="2" width="10" height="7" fill="none" stroke="#fff" stroke-width="1.1"/><path d="M2.5 2 L7.5 6 L12.5 2" fill="none" stroke="#fff" stroke-width="1"/></svg></div>
<div class="bd" style="left:639.1px;top:229px;width:15px">97</div>
<div class="bd" style="left:655.1px;top:229px;width:15px"><svg width="15" height="11" style="display:block"><rect x="2.5" y="2" width="10" height="7" fill="none" stroke="#fff" stroke-width="1.1"/><path d="M2.5 2 L7.5 6 L12.5 2" fill="none" stroke="#fff" stroke-width="1"/></svg></div>
<div class="bg" style="left:671.1px;top:229px;width:7px;font-size:9px">$</div>
<div class="bd" style="left:834.0px;top:229px;width:15px">98</div>
<div class="bd" style="left:850.0px;top:229px;width:15px"><svg width="15" height="11" style="display:block"><rect x="2.5" y="2" width="10" height="7" fill="none" stroke="#fff" stroke-width="1.1"/><path d="M2.5 2 L7.5 6 L12.5 2" fill="none" stroke="#fff" stroke-width="1"/></svg></div>
<div class="bd" style="left:1028.8px;top:229px;width:15px">99</div>
<div class="bd" style="left:1044.8px;top:229px;width:15px"><svg width="15" height="11" style="display:block"><rect x="2.5" y="2" width="10" height="7" fill="none" stroke="#fff" stroke-width="1.1"/><path d="M2.5 2 L7.5 6 L12.5 2" fill="none" stroke="#fff" stroke-width="1"/></svg></div>
<div class="bd" style="left:1223.7px;top:229px;width:15px">00</div>
<div class="bd" style="left:1239.7px;top:229px;width:15px"><svg width="15" height="11" style="display:block"><rect x="2.5" y="2" width="10" height="7" fill="none" stroke="#fff" stroke-width="1.1"/><path d="M2.5 2 L7.5 6 L12.5 2" fill="none" stroke="#fff" stroke-width="1"/></svg></div>
<div class="bd" style="left:1418.6px;top:229px;width:15px">01</div>
<div class="bd" style="left:1434.6px;top:229px;width:15px"><svg width="15" height="11" style="display:block"><rect x="2.5" y="2" width="10" height="7" fill="none" stroke="#fff" stroke-width="1.1"/><path d="M2.5 2 L7.5 6 L12.5 2" fill="none" stroke="#fff" stroke-width="1"/></svg></div>
<div class="bd" style="left:1613.4px;top:229px;width:15px">03</div>
<div class="bd" style="left:1629.4px;top:229px;width:15px"><svg width="15" height="11" style="display:block"><rect x="2.5" y="2" width="10" height="7" fill="none" stroke="#fff" stroke-width="1.1"/><path d="M2.5 2 L7.5 6 L12.5 2" fill="none" stroke="#fff" stroke-width="1"/></svg></div>
<div class="bg" style="left:1645.4px;top:229px;width:7px;font-size:9px">$</div>
<div class="bg" style="left:249.4px;top:479px;width:15px">04</div>
<div class="bg" style="left:265.4px;top:479px;width:15px"><svg width="15" height="11" style="display:block"><rect x="2.5" y="2" width="10" height="7" fill="none" stroke="#d0d0d0" stroke-width="1.1"/><path d="M2.5 2 L7.5 6 L12.5 2" fill="none" stroke="#d0d0d0" stroke-width="1"/></svg></div>
<div class="bg" style="left:281.4px;top:479px;width:7px;font-size:9px">$</div>
<div class="bg" style="left:639.1px;top:479px;width:15px">05</div>
<div class="bg" style="left:655.1px;top:479px;width:15px"><svg width="15" height="11" style="display:block"><rect x="2.5" y="2" width="10" height="7" fill="none" stroke="#d0d0d0" stroke-width="1.1"/><path d="M2.5 2 L7.5 6 L12.5 2" fill="none" stroke="#d0d0d0" stroke-width="1"/></svg></div>
<div class="bg" style="left:671.1px;top:479px;width:7px;font-size:9px">$</div>
<div class="bg" style="left:1613.4px;top:479px;width:15px">06</div>
<div class="bg" style="left:1629.4px;top:479px;width:15px"><svg width="15" height="11" style="display:block"><rect x="2.5" y="2" width="10" height="7" fill="none" stroke="#d0d0d0" stroke-width="1.1"/><path d="M2.5 2 L7.5 6 L12.5 2" fill="none" stroke="#d0d0d0" stroke-width="1"/></svg></div>
<div class="bg" style="left:1645.4px;top:479px;width:7px;font-size:9px">$</div>
<div class="bd" style="left:249.4px;top:569px;width:15px">07</div>
<div class="bd" style="left:265.4px;top:569px;width:15px"><svg width="15" height="11" style="display:block"><rect x="2.5" y="2" width="10" height="7" fill="none" stroke="#fff" stroke-width="1.1"/><path d="M2.5 2 L7.5 6 L12.5 2" fill="none" stroke="#fff" stroke-width="1"/></svg></div>
<div class="bd" style="left:444.3px;top:569px;width:15px">08</div>
<div class="bd" style="left:460.3px;top:569px;width:15px"><svg width="15" height="11" style="display:block"><rect x="2.5" y="2" width="10" height="7" fill="none" stroke="#fff" stroke-width="1.1"/><path d="M2.5 2 L7.5 6 L12.5 2" fill="none" stroke="#fff" stroke-width="1"/></svg></div>
<div class="bd" style="left:639.1px;top:569px;width:15px">09</div>
<div class="bd" style="left:655.1px;top:569px;width:15px"><svg width="15" height="11" style="display:block"><rect x="2.5" y="2" width="10" height="7" fill="none" stroke="#fff" stroke-width="1.1"/><path d="M2.5 2 L7.5 6 L12.5 2" fill="none" stroke="#fff" stroke-width="1"/></svg></div>
<div class="bd" style="left:834.0px;top:569px;width:15px">10</div>
<div class="bd" style="left:850.0px;top:569px;width:15px"><svg width="15" height="11" style="display:block"><rect x="2.5" y="2" width="10" height="7" fill="none" stroke="#fff" stroke-width="1.1"/><path d="M2.5 2 L7.5 6 L12.5 2" fill="none" stroke="#fff" stroke-width="1"/></svg></div>
<div class="bd" style="left:1028.8px;top:569px;width:15px">11</div>
<div class="bd" style="left:1044.8px;top:569px;width:15px"><svg width="15" height="11" style="display:block"><rect x="2.5" y="2" width="10" height="7" fill="none" stroke="#fff" stroke-width="1.1"/><path d="M2.5 2 L7.5 6 L12.5 2" fill="none" stroke="#fff" stroke-width="1"/></svg></div>
<div class="bd" style="left:1223.7px;top:569px;width:15px">12</div>
<div class="bd" style="left:1239.7px;top:569px;width:15px"><svg width="15" height="11" style="display:block"><rect x="2.5" y="2" width="10" height="7" fill="none" stroke="#fff" stroke-width="1.1"/><path d="M2.5 2 L7.5 6 L12.5 2" fill="none" stroke="#fff" stroke-width="1"/></svg></div>
<div class="bd" style="left:1418.6px;top:569px;width:15px">13</div>
<div class="bd" style="left:1434.6px;top:569px;width:15px"><svg width="15" height="11" style="display:block"><rect x="2.5" y="2" width="10" height="7" fill="none" stroke="#fff" stroke-width="1.1"/><path d="M2.5 2 L7.5 6 L12.5 2" fill="none" stroke="#fff" stroke-width="1"/></svg></div>
<div class="bd" style="left:1613.4px;top:569px;width:15px">14</div>
<div class="bd" style="left:1629.4px;top:569px;width:15px"><svg width="15" height="11" style="display:block"><rect x="2.5" y="2" width="10" height="7" fill="none" stroke="#fff" stroke-width="1.1"/><path d="M2.5 2 L7.5 6 L12.5 2" fill="none" stroke="#fff" stroke-width="1"/></svg></div>
<div class="bg" style="left:249.4px;top:819px;width:15px">15</div>
<div class="bg" style="left:265.4px;top:819px;width:15px"><svg width="15" height="11" style="display:block"><rect x="2.5" y="2" width="10" height="7" fill="none" stroke="#d0d0d0" stroke-width="1.1"/><path d="M2.5 2 L7.5 6 L12.5 2" fill="none" stroke="#d0d0d0" stroke-width="1"/></svg></div>
<div class="bg" style="left:281.4px;top:819px;width:7px;font-size:9px">$</div>
<div class="bg" style="left:639.1px;top:819px;width:15px">16</div>
<div class="bg" style="left:655.1px;top:819px;width:15px"><svg width="15" height="11" style="display:block"><rect x="2.5" y="2" width="10" height="7" fill="none" stroke="#d0d0d0" stroke-width="1.1"/><path d="M2.5 2 L7.5 6 L12.5 2" fill="none" stroke="#d0d0d0" stroke-width="1"/></svg></div>
<div class="bg" style="left:671.1px;top:819px;width:7px;font-size:9px">$</div>
<div class="bg" style="left:1613.4px;top:819px;width:15px">17</div>
<div class="bg" style="left:1629.4px;top:819px;width:15px"><svg width="15" height="11" style="display:block"><rect x="2.5" y="2" width="10" height="7" fill="none" stroke="#d0d0d0" stroke-width="1.1"/><path d="M2.5 2 L7.5 6 L12.5 2" fill="none" stroke="#d0d0d0" stroke-width="1"/></svg></div>
<div class="bg" style="left:1645.4px;top:819px;width:7px;font-size:9px">$</div>
<div class="bd" style="left:249.4px;top:909px;width:15px">18</div>
<div class="bd" style="left:265.4px;top:909px;width:15px"><svg width="15" height="11" style="display:block"><rect x="2.5" y="2" width="10" height="7" fill="none" stroke="#fff" stroke-width="1.1"/><path d="M2.5 2 L7.5 6 L12.5 2" fill="none" stroke="#fff" stroke-width="1"/></svg></div>
<div class="bd" style="left:444.3px;top:909px;width:15px">19</div>
<div class="bd" style="left:460.3px;top:909px;width:15px"><svg width="15" height="11" style="display:block"><rect x="2.5" y="2" width="10" height="7" fill="none" stroke="#fff" stroke-width="1.1"/><path d="M2.5 2 L7.5 6 L12.5 2" fill="none" stroke="#fff" stroke-width="1"/></svg></div>
<div class="bd" style="left:639.1px;top:909px;width:15px">20</div>
<div class="bd" style="left:655.1px;top:909px;width:15px"><svg width="15" height="11" style="display:block"><rect x="2.5" y="2" width="10" height="7" fill="none" stroke="#fff" stroke-width="1.1"/><path d="M2.5 2 L7.5 6 L12.5 2" fill="none" stroke="#fff" stroke-width="1"/></svg></div>
<div class="bd" style="left:834.0px;top:909px;width:15px">21</div>
<div class="bd" style="left:850.0px;top:909px;width:15px"><svg width="15" height="11" style="display:block"><rect x="2.5" y="2" width="10" height="7" fill="none" stroke="#fff" stroke-width="1.1"/><path d="M2.5 2 L7.5 6 L12.5 2" fill="none" stroke="#fff" stroke-width="1"/></svg></div>
<div class="bd" style="left:1028.8px;top:909px;width:15px">22</div>
<div class="bd" style="left:1044.8px;top:909px;width:15px"><svg width="15" height="11" style="display:block"><rect x="2.5" y="2" width="10" height="7" fill="none" stroke="#fff" stroke-width="1.1"/><path d="M2.5 2 L7.5 6 L12.5 2" fill="none" stroke="#fff" stroke-width="1"/></svg></div>
<div class="bd" style="left:1223.7px;top:909px;width:15px">23</div>
<div class="bd" style="left:1239.7px;top:909px;width:15px"><svg width="15" height="11" style="display:block"><rect x="2.5" y="2" width="10" height="7" fill="none" stroke="#fff" stroke-width="1.1"/><path d="M2.5 2 L7.5 6 L12.5 2" fill="none" stroke="#fff" stroke-width="1"/></svg></div>
<div class="bd" style="left:1418.6px;top:909px;width:15px">24</div>
<div class="bd" style="left:1434.6px;top:909px;width:15px"><svg width="15" height="11" style="display:block"><rect x="2.5" y="2" width="10" height="7" fill="none" stroke="#fff" stroke-width="1.1"/><path d="M2.5 2 L7.5 6 L12.5 2" fill="none" stroke="#fff" stroke-width="1"/></svg></div>
<div class="bd" style="left:1613.4px;top:909px;width:15px">25</div>
<div class="bd" style="left:1629.4px;top:909px;width:15px"><svg width="15" height="11" style="display:block"><rect x="2.5" y="2" width="10" height="7" fill="none" stroke="#fff" stroke-width="1.1"/><path d="M2.5 2 L7.5 6 L12.5 2" fill="none" stroke="#fff" stroke-width="1"/></svg></div>
<div class="bg" style="left:249.4px;top:1159px;width:15px">26</div>
<div class="bg" style="left:265.4px;top:1159px;width:15px"><svg width="15" height="11" style="display:block"><rect x="2.5" y="2" width="10" height="7" fill="none" stroke="#d0d0d0" stroke-width="1.1"/><path d="M2.5 2 L7.5 6 L12.5 2" fill="none" stroke="#d0d0d0" stroke-width="1"/></svg></div>
<div class="bg" style="left:281.4px;top:1159px;width:7px;font-size:9px">$</div>
<div class="bg" style="left:639.1px;top:1159px;width:15px">27</div>
<div class="bg" style="left:655.1px;top:1159px;width:15px"><svg width="15" height="11" style="display:block"><rect x="2.5" y="2" width="10" height="7" fill="none" stroke="#d0d0d0" stroke-width="1.1"/><path d="M2.5 2 L7.5 6 L12.5 2" fill="none" stroke="#d0d0d0" stroke-width="1"/></svg></div>
<div class="bg" style="left:671.1px;top:1159px;width:7px;font-size:9px">$</div>
<div class="bg" style="left:1613.4px;top:1159px;width:15px">28</div>
<div class="bg" style="left:1629.4px;top:1159px;width:15px"><svg width="15" height="11" style="display:block"><rect x="2.5" y="2" width="10" height="7" fill="none" stroke="#d0d0d0" stroke-width="1.1"/><path d="M2.5 2 L7.5 6 L12.5 2" fill="none" stroke="#d0d0d0" stroke-width="1"/></svg></div>
<div class="bg" style="left:1645.4px;top:1159px;width:7px;font-size:9px">$</div>
<div class="bd" style="left:249.4px;top:1249px;width:15px">29</div>
<div class="bd" style="left:265.4px;top:1249px;width:15px"><svg width="15" height="11" style="display:block"><rect x="2.5" y="2" width="10" height="7" fill="none" stroke="#fff" stroke-width="1.1"/><path d="M2.5 2 L7.5 6 L12.5 2" fill="none" stroke="#fff" stroke-width="1"/></svg></div>
<div class="bd" style="left:444.3px;top:1249px;width:15px">30</div>
<div class="bd" style="left:460.3px;top:1249px;width:15px"><svg width="15" height="11" style="display:block"><rect x="2.5" y="2" width="10" height="7" fill="none" stroke="#fff" stroke-width="1.1"/><path d="M2.5 2 L7.5 6 L12.5 2" fill="none" stroke="#fff" stroke-width="1"/></svg></div>
<div class="bd" style="left:639.1px;top:1249px;width:15px">31</div>
<div class="bd" style="left:655.1px;top:1249px;width:15px"><svg width="15" height="11" style="display:block"><rect x="2.5" y="2" width="10" height="7" fill="none" stroke="#fff" stroke-width="1.1"/><path d="M2.5 2 L7.5 6 L12.5 2" fill="none" stroke="#fff" stroke-width="1"/></svg></div>
<div class="bd" style="left:834.0px;top:1249px;width:15px">32</div>
<div class="bd" style="left:850.0px;top:1249px;width:15px"><svg width="15" height="11" style="display:block"><rect x="2.5" y="2" width="10" height="7" fill="none" stroke="#fff" stroke-width="1.1"/><path d="M2.5 2 L7.5 6 L12.5 2" fill="none" stroke="#fff" stroke-width="1"/></svg></div>
<div class="bd" style="left:1028.8px;top:1249px;width:15px">33</div>
<div class="bd" style="left:1044.8px;top:1249px;width:15px"><svg width="15" height="11" style="display:block"><rect x="2.5" y="2" width="10" height="7" fill="none" stroke="#fff" stroke-width="1.1"/><path d="M2.5 2 L7.5 6 L12.5 2" fill="none" stroke="#fff" stroke-width="1"/></svg></div>
<div class="bd" style="left:1223.7px;top:1249px;width:15px">34</div>
<div class="bd" style="left:1239.7px;top:1249px;width:15px"><svg width="15" height="11" style="display:block"><rect x="2.5" y="2" width="10" height="7" fill="none" stroke="#fff" stroke-width="1.1"/><path d="M2.5 2 L7.5 6 L12.5 2" fill="none" stroke="#fff" stroke-width="1"/></svg></div>
<div class="bd" style="left:1418.6px;top:1249px;width:15px">35</div>
<div class="bd" style="left:1434.6px;top:1249px;width:15px"><svg width="15" height="11" style="display:block"><rect x="2.5" y="2" width="10" height="7" fill="none" stroke="#fff" stroke-width="1.1"/><path d="M2.5 2 L7.5 6 L12.5 2" fill="none" stroke="#fff" stroke-width="1"/></svg></div>
<div class="bd" style="left:1613.4px;top:1249px;width:15px">36</div>
<div class="bd" style="left:1629.4px;top:1249px;width:15px"><svg width="15" height="11" style="display:block"><rect x="2.5" y="2" width="10" height="7" fill="none" stroke="#fff" stroke-width="1.1"/><path d="M2.5 2 L7.5 6 L12.5 2" fill="none" stroke="#fff" stroke-width="1"/></svg></div>
</div></div>
<div class="ab" style="left:2078px;top:138px;width:24px;height:1125px;background:#4a4a4a"></div>
<svg class="ab" style="left:2086px;top:148px" width="13" height="8"><path d="M1 7 L6.5 1.5 L12 7" stroke="#9a9a9a" stroke-width="1.3" fill="none"/></svg>
<svg class="ab" style="left:2086px;top:1244px" width="13" height="8"><path d="M1 1 L6.5 6.5 L12 1" stroke="#9a9a9a" stroke-width="1.3" fill="none"/></svg>
<div class="ab" style="left:2081px;top:773px;width:18px;height:175px;background:#6a6a6a;border-radius:3px"></div>
<div class="ab" style="left:2102px;top:94px;width:4px;height:1193px;background:#474747;border-left:1px solid #3a3a3a;border-right:1px solid #3a3a3a"></div>
<div class="ab" style="left:67px;top:1263px;width:2011px;height:24px;background:#4a4a4a"></div>
<div class="ab" style="left:139px;top:1263px;width:276px;height:24px;background:#535353"></div>
<div class="ab" style="left:76px;top:1266px;font-size:15.5px;color:#e8e8e8;white-space:nowrap">72.05%</div>
<div class="ab" style="left:175px;top:1266px;font-size:15px;color:#dcdcdc;white-space:nowrap">2386 px x 6662 px (200 ppi)</div>
<svg class="ab" style="left:399px;top:1268px" width="8" height="14"><path d="M1.5 1 L6.5 7 L1.5 13" stroke="#cfcfcf" stroke-width="1.3" fill="none"/></svg>
<svg class="ab" style="left:427px;top:1270px" width="8" height="12"><path d="M6.5 1 L1.5 6 L6.5 11" stroke="#8f8f8f" stroke-width="1.3" fill="none"/></svg>
<div class="ab" style="left:966px;top:1266px;width:593px;height:18px;background:#6a6a6a;border-radius:3px"></div>
<svg class="ab" style="left:2058px;top:1270px" width="8" height="12"><path d="M1.5 1 L6.5 6 L1.5 11" stroke="#9a9a9a" stroke-width="1.3" fill="none"/></svg>
<div class="ab" style="left:2078px;top:1263px;width:24px;height:24px;background:#535353"></div>
<div class="ab" style="left:0;top:1287px;width:2340px;height:6px;background:#474747"></div>
<div class="ab" style="left:6px;top:1286px;width:2328px;height:1px;background:#3a3a3a"></div>
<div class="ab" style="left:2106px;top:94px;width:228px;height:1194px;background:#3a3a3a"></div>
<div class="ab" style="left:2107px;top:94px;width:226px;height:17px;background:#424242"></div>
<svg class="ab" style="left:2144px;top:98px" width="12" height="9"><path d="M5 1 L1.5 4.5 L5 8 M10.5 1 L7 4.5 L10.5 8" stroke="#ddd" stroke-width="1.2" fill="none"/></svg>
<svg class="ab" style="left:2313px;top:98px" width="12" height="9"><path d="M5 1 L1.5 4.5 L5 8 M10.5 1 L7 4.5 L10.5 8" stroke="#ddd" stroke-width="1.2" fill="none"/></svg>
<div class="ab" style="left:2107px;top:112px;width:57px;height:102px;background:#535353"></div>
<div class="ab" style="left:2107px;top:216px;width:57px;height:60px;background:#535353"></div>
<div class="ab" style="left:2107px;top:277px;width:57px;height:61px;background:#535353"></div>
<div class="ab" style="left:2107px;top:340px;width:57px;height:946px;background:#535353"></div>
<div class="ab" style="left:2121px;top:117px;width:28px;height:6px;background:repeating-linear-gradient(90deg,#404040 0 1.5px,transparent 1.5px 3px)"></div>
<div class="ab" style="left:2121px;top:221px;width:28px;height:6px;background:repeating-linear-gradient(90deg,#404040 0 1.5px,transparent 1.5px 3px)"></div>
<div class="ab" style="left:2121px;top:282px;width:28px;height:6px;background:repeating-linear-gradient(90deg,#404040 0 1.5px,transparent 1.5px 3px)"></div>
<svg class="ab" style="left:2121px;top:133px" width="26" height="28"><rect x="3" y="2" width="6" height="6" fill="none" stroke="#e0e0e0" stroke-width="1.5"/><rect x="3" y="11" width="6" height="6" fill="none" stroke="#e0e0e0" stroke-width="1.5"/><rect x="2.5" y="19.5" width="7" height="7" fill="#e0e0e0"/><path d="M16 5 C22 6 23 14 17 20" stroke="#e0e0e0" stroke-width="2" fill="none"/><path d="M13 6 L18 2 L18 9 Z" fill="#e0e0e0"/></svg>
<svg class="ab" style="left:2124px;top:177px" width="22" height="23"><path d="M1.5 1 L21 11.5 L1.5 22 Z" fill="#e0e0e0"/></svg>
<svg class="ab" style="left:2121px;top:236px" width="28" height="28"><circle cx="13.5" cy="13.5" r="11.5" stroke="#e0e0e0" stroke-width="1.7" fill="none"/><circle cx="13.5" cy="8" r="1.4" fill="#e0e0e0"/><rect x="12.5" y="11" width="2" height="9" fill="#e0e0e0"/></svg>
<div class="ab" style="left:2121px;top:293px;font:italic 30px 'Liberation Serif';color:#e0e0e0">A</div>
<div class="ab" style="left:2167px;top:112px;width:166px;height:186px;background:#535353"></div>
<div class="ab" style="left:2235px;top:116px;width:28px;height:6px;background:repeating-linear-gradient(90deg,#404040 0 1.5px,transparent 1.5px 3px)"></div>
<div class="ab" style="left:2167px;top:300px;width:166px;height:144px;background:#535353"></div>
<div class="ab" style="left:2235px;top:304px;width:28px;height:6px;background:repeating-linear-gradient(90deg,#404040 0 1.5px,transparent 1.5px 3px)"></div>
<div class="ab" style="left:2167px;top:446px;width:166px;height:143px;background:#535353"></div>
<div class="ab" style="left:2235px;top:450px;width:28px;height:6px;background:repeating-linear-gradient(90deg,#404040 0 1.5px,transparent 1.5px 3px)"></div>
<div class="ab" style="left:2167px;top:592px;width:166px;height:694px;background:#535353"></div>
<div class="pi" style="left:2223px;top:139px">Color</div>
<div class="pi" style="left:2223px;top:181px">Swatches</div>
<div class="pi" style="left:2223px;top:223px">Gradients</div>
<div class="pi" style="left:2223px;top:265px">Patterns</div>
<div class="pi" style="left:2223px;top:326px">Properties</div>
<div class="pi" style="left:2223px;top:368px">Adjustme...</div>
<div class="pi" style="left:2223px;top:410px">Libraries</div>
<div class="pi" style="left:2223px;top:472px">Layers</div>
<div class="pi" style="left:2223px;top:514px">Channels</div>
<div class="pi" style="left:2223px;top:556px">Paths</div>
<svg class="ab" style="left:2180px;top:135px" width="29" height="25"><path d="M14 2 C6 2 1 6 1 11 C1 15 5 18 11 18 C14 18 14 15 16 15 C19 15 27 16 27 10 C27 5 21 2 14 2 Z" fill="#e0e0e0"/><circle cx="6" cy="10" r="1.8" fill="#535353"/><circle cx="10" cy="14" r="1.8" fill="#535353"/><circle cx="16" cy="6" r="1.8" fill="#535353"/><circle cx="21" cy="9" r="1.8" fill="#535353"/><circle cx="10" cy="6" r="1.5" fill="#535353"/></svg>
<svg class="ab" style="left:2180px;top:177px" width="29" height="25"><rect x="2" y="2" width="24" height="19" fill="none" stroke="#e0e0e0" stroke-width="1.6"/><path d="M2 8.5 H26 M2 15 H26 M10 2 V21 M18 2 V21" stroke="#e0e0e0" stroke-width="1.4"/><rect x="3" y="3" width="7" height="5" fill="#aaa"/><rect x="18" y="15.5" width="8" height="5" fill="#333"/><rect x="10.5" y="15.5" width="7" height="5" fill="#444"/></svg>
<svg class="ab" style="left:2180px;top:219px" width="29" height="25"><defs><linearGradient id="gr1"><stop offset="0" stop-color="#333"/><stop offset="1" stop-color="#ddd"/></linearGradient></defs><rect x="2" y="1.5" width="24" height="19" fill="url(#gr1)" stroke="#e0e0e0" stroke-width="1.6"/></svg>
<svg class="ab" style="left:2180px;top:261px" width="29" height="25"><rect x="1.5" y="1.5" width="25" height="20" fill="#e0e0e0"/><path d="M6 4 V19 M14 4 V19 M22 4 V19 M4 8 H24 M4 15 H24" stroke="#535353" stroke-width="1.8" stroke-dasharray="3 2"/></svg>
<svg class="ab" style="left:2180px;top:322px" width="29" height="25"><path d="M2 4 H26 M2 11 H26 M2 18 H26" stroke="#e0e0e0" stroke-width="1.5"/><circle cx="9" cy="4" r="2.8" fill="#535353" stroke="#e0e0e0" stroke-width="1.5"/><circle cx="17" cy="11" r="2.8" fill="#535353" stroke="#e0e0e0" stroke-width="1.5"/><circle cx="9" cy="18" r="2.8" fill="#535353" stroke="#e0e0e0" stroke-width="1.5"/></svg>
<svg class="ab" style="left:2180px;top:364px" width="29" height="25"><circle cx="14" cy="11" r="10" fill="#e0e0e0"/><path d="M21 4 L7 18 A10 10 0 0 1 21 4 Z" fill="#535353"/><circle cx="14" cy="11" r="10" fill="none" stroke="#e0e0e0" stroke-width="1.8"/></svg>
<svg class="ab" style="left:2180px;top:406px" width="29" height="25"><rect x="1" y="1" width="20" height="20" fill="none" stroke="#aaa" stroke-width="1.5"/><rect x="5" y="4" width="20" height="20" fill="#535353" stroke="#e0e0e0" stroke-width="1.8"/><path d="M15 4 V12 L17.5 10 L20 12 V4" fill="#e0e0e0"/></svg>
<svg class="ab" style="left:2180px;top:468px" width="29" height="25"><path d="M14 1 L27 8 L14 15 L1 8 Z" fill="#e0e0e0"/><path d="M4 12 L14 17.5 L24 12 L27 14 L14 21 L1 14 Z" fill="#e0e0e0"/></svg>
<svg class="ab" style="left:2180px;top:510px" width="29" height="25"><circle cx="15" cy="8.5" r="7.5" fill="#8c8c8c"/><circle cx="10" cy="16.5" r="7.5" fill="#c8c8c8" opacity="0.85"/><circle cx="20" cy="16.5" r="7.5" fill="#d0d0d0" opacity="0.8"/><path d="M15 10.5 Q12 14 13 17 Q15 19 17 17 Q18 14 15 10.5 Z" fill="#3a3a3a"/></svg>
<svg class="ab" style="left:2180px;top:552px" width="29" height="25"><path d="M6 20 C6 9 10 4 15 4 C20 4 24 9 24 20" stroke="#e0e0e0" stroke-width="1.3" fill="none"/><path d="M2 4 H28" stroke="#e0e0e0" stroke-width="1.3"/><rect x="0" y="1" width="5.5" height="5.5" fill="#e0e0e0"/><rect x="24" y="1" width="5.5" height="5.5" fill="#e0e0e0"/><circle cx="15" cy="4" r="2.2" fill="#e0e0e0"/><rect x="4" y="19.5" width="4.5" height="4.5" fill="none" stroke="#e0e0e0" stroke-width="1.2"/><rect x="22" y="19.5" width="4.5" height="4.5" fill="none" stroke="#e0e0e0" stroke-width="1.2"/></svg>
<div class="ab" style="left:2163px;top:112px;width:4px;height:1176px;background:#474747;border-left:1px solid #3a3a3a;border-right:1px solid #3a3a3a"></div>
</body></html>
